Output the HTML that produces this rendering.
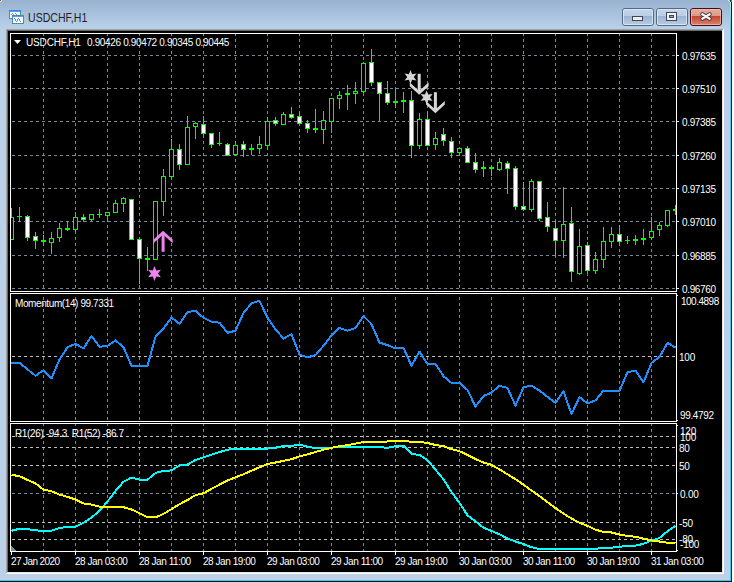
<!DOCTYPE html>
<html><head><meta charset="utf-8">
<style>
html,body{margin:0;padding:0;background:#fff;}
#win{position:absolute;left:0;top:0;width:734px;height:582px;overflow:hidden;}
.frame{position:absolute;left:0;top:0;width:730px;height:580px;background:linear-gradient(#97b1cf 0px,#b9d0e9 28px,#bbd0e8 60px,#bcd1e8 100%);border-bottom:1px solid #2ad4f0;}
.cyr{position:absolute;left:730px;top:2px;width:1px;height:579px;background:linear-gradient(#bdeef8 0px,#8adcf4 10px,#50cef2 24px,#40ccf0 300px,#2ad4f0 579px);}
.edge{position:absolute;left:0;top:0;width:732px;height:582px;border-right:1px solid #1c1414;border-bottom:1px solid #101414;box-sizing:border-box;}
.t{position:absolute;font-family:"Liberation Sans",sans-serif;white-space:pre;line-height:12px;}
svg{position:absolute;left:0;top:0;}
.title{position:absolute;left:28px;top:10px;font-family:"Liberation Sans",sans-serif;font-size:12px;letter-spacing:0px;transform:scaleX(0.88);transform-origin:0 0;color:#1e1e28;line-height:16px;white-space:pre;}
.btn{position:absolute;top:8px;width:30px;height:16px;border:1px solid #5b6e86;border-radius:3px;background:linear-gradient(#c2d5ea 0px,#bcd0e7 7px,#99b3d1 8px,#a6bed9 14px,#b7cce4 16px);box-shadow:inset 0 0 0 1px rgba(255,255,255,0.55);}
.btn.close{border-color:#4a1623;background:linear-gradient(#eaa898 0px,#e3988a 7px,#c8442a 8px,#c54a30 13px,#d87a66 16px);box-shadow:inset 0 0 0 1px rgba(255,210,200,0.6);}
.gmin{position:absolute;left:9px;top:7px;width:9px;height:3px;background:#ececec;border:1px solid #3b4556;border-radius:1px;}
.gmax{position:absolute;left:9px;top:3px;width:7px;height:5px;border:2px solid #ececec;outline:1px solid #3b4556;background:#3b4556;}
</style></head><body><div id="win">
<div class="frame"></div><div class="edge"></div><div class="cyr"></div>
<svg width="734" height="4" style="left:0;top:0" shape-rendering="crispEdges"><rect x="0" y="0" width="1" height="1" fill="#6a6a6a"/><rect x="1" y="0" width="1" height="1" fill="#e6e6e4"/><rect x="0" y="1" width="1" height="1" fill="#e6e2de"/><rect x="1" y="1" width="1" height="1" fill="#a8bcd2"/><rect x="728" y="0" width="1" height="1" fill="#c8eef8"/><rect x="729" y="0" width="1" height="1" fill="#7fcfe0"/><rect x="730" y="0" width="1" height="1" fill="#1a1414"/><rect x="730" y="1" width="1" height="1" fill="#104048"/><rect x="729" y="1" width="1" height="1" fill="#bdeef8"/><rect x="731" y="0" width="1" height="2" fill="#8a8a8a"/></svg>
<div class="title">USDCHF,H1</div>
<svg width="30" height="30" style="left:0;top:0" shape-rendering="crispEdges"><rect x="9" y="10" width="12" height="9" fill="#fff"/><rect x="9" y="10" width="1" height="1" fill="#3f8c86"/><rect x="9" y="18" width="1" height="1" fill="#3f8c86"/><rect x="10" y="10" width="1" height="1" fill="#4a8ef4"/><rect x="10" y="18" width="1" height="1" fill="#4a8ef4"/><rect x="11" y="10" width="1" height="1" fill="#3f8c86"/><rect x="11" y="18" width="1" height="1" fill="#3f8c86"/><rect x="12" y="10" width="1" height="1" fill="#4a8ef4"/><rect x="12" y="18" width="1" height="1" fill="#4a8ef4"/><rect x="13" y="10" width="1" height="1" fill="#3f8c86"/><rect x="13" y="18" width="1" height="1" fill="#3f8c86"/><rect x="14" y="10" width="1" height="1" fill="#4a8ef4"/><rect x="14" y="18" width="1" height="1" fill="#4a8ef4"/><rect x="15" y="10" width="1" height="1" fill="#3f8c86"/><rect x="15" y="18" width="1" height="1" fill="#3f8c86"/><rect x="16" y="10" width="1" height="1" fill="#4a8ef4"/><rect x="16" y="18" width="1" height="1" fill="#4a8ef4"/><rect x="17" y="10" width="1" height="1" fill="#3f8c86"/><rect x="17" y="18" width="1" height="1" fill="#3f8c86"/><rect x="18" y="10" width="1" height="1" fill="#4a8ef4"/><rect x="18" y="18" width="1" height="1" fill="#4a8ef4"/><rect x="19" y="10" width="1" height="1" fill="#3f8c86"/><rect x="19" y="18" width="1" height="1" fill="#3f8c86"/><rect x="20" y="10" width="1" height="1" fill="#4a8ef4"/><rect x="20" y="18" width="1" height="1" fill="#4a8ef4"/><rect x="9" y="11" width="1" height="1" fill="#4a8ef4"/><rect x="20" y="11" width="1" height="1" fill="#3f8c86"/><rect x="9" y="12" width="1" height="1" fill="#3f8c86"/><rect x="20" y="12" width="1" height="1" fill="#4a8ef4"/><rect x="9" y="13" width="1" height="1" fill="#4a8ef4"/><rect x="20" y="13" width="1" height="1" fill="#3f8c86"/><rect x="9" y="14" width="1" height="1" fill="#3f8c86"/><rect x="20" y="14" width="1" height="1" fill="#4a8ef4"/><rect x="9" y="15" width="1" height="1" fill="#4a8ef4"/><rect x="20" y="15" width="1" height="1" fill="#3f8c86"/><rect x="9" y="16" width="1" height="1" fill="#3f8c86"/><rect x="20" y="16" width="1" height="1" fill="#4a8ef4"/><rect x="9" y="17" width="1" height="1" fill="#4a8ef4"/><rect x="20" y="17" width="1" height="1" fill="#3f8c86"/><rect x="10" y="11" width="10" height="1" fill="#5a98f6"/><rect x="11" y="14" width="1" height="1" fill="#4f90f6"/><rect x="12" y="13" width="1" height="1" fill="#4f90f6"/><rect x="13" y="14" width="1" height="1" fill="#4f90f6"/><rect x="15" y="13" width="1" height="1" fill="#4f90f6"/><rect x="16" y="14" width="1" height="1" fill="#4f90f6"/><rect x="17" y="15" width="1" height="1" fill="#4f90f6"/><rect x="12" y="15" width="12" height="9" fill="#fff"/><rect x="12" y="15" width="1" height="1" fill="#3f8c86"/><rect x="12" y="23" width="1" height="1" fill="#3f8c86"/><rect x="13" y="15" width="1" height="1" fill="#4a8ef4"/><rect x="13" y="23" width="1" height="1" fill="#4a8ef4"/><rect x="14" y="15" width="1" height="1" fill="#3f8c86"/><rect x="14" y="23" width="1" height="1" fill="#3f8c86"/><rect x="15" y="15" width="1" height="1" fill="#4a8ef4"/><rect x="15" y="23" width="1" height="1" fill="#4a8ef4"/><rect x="16" y="15" width="1" height="1" fill="#3f8c86"/><rect x="16" y="23" width="1" height="1" fill="#3f8c86"/><rect x="17" y="15" width="1" height="1" fill="#4a8ef4"/><rect x="17" y="23" width="1" height="1" fill="#4a8ef4"/><rect x="18" y="15" width="1" height="1" fill="#3f8c86"/><rect x="18" y="23" width="1" height="1" fill="#3f8c86"/><rect x="19" y="15" width="1" height="1" fill="#4a8ef4"/><rect x="19" y="23" width="1" height="1" fill="#4a8ef4"/><rect x="20" y="15" width="1" height="1" fill="#3f8c86"/><rect x="20" y="23" width="1" height="1" fill="#3f8c86"/><rect x="21" y="15" width="1" height="1" fill="#4a8ef4"/><rect x="21" y="23" width="1" height="1" fill="#4a8ef4"/><rect x="22" y="15" width="1" height="1" fill="#3f8c86"/><rect x="22" y="23" width="1" height="1" fill="#3f8c86"/><rect x="23" y="15" width="1" height="1" fill="#4a8ef4"/><rect x="23" y="23" width="1" height="1" fill="#4a8ef4"/><rect x="12" y="16" width="1" height="1" fill="#4a8ef4"/><rect x="23" y="16" width="1" height="1" fill="#3f8c86"/><rect x="12" y="17" width="1" height="1" fill="#3f8c86"/><rect x="23" y="17" width="1" height="1" fill="#4a8ef4"/><rect x="12" y="18" width="1" height="1" fill="#4a8ef4"/><rect x="23" y="18" width="1" height="1" fill="#3f8c86"/><rect x="12" y="19" width="1" height="1" fill="#3f8c86"/><rect x="23" y="19" width="1" height="1" fill="#4a8ef4"/><rect x="12" y="20" width="1" height="1" fill="#4a8ef4"/><rect x="23" y="20" width="1" height="1" fill="#3f8c86"/><rect x="12" y="21" width="1" height="1" fill="#3f8c86"/><rect x="23" y="21" width="1" height="1" fill="#4a8ef4"/><rect x="12" y="22" width="1" height="1" fill="#4a8ef4"/><rect x="23" y="22" width="1" height="1" fill="#3f8c86"/><rect x="13" y="16" width="10" height="1" fill="#5a98f6"/><rect x="14" y="18" width="1" height="1" fill="#4f90f6"/><rect x="15" y="19" width="1" height="1" fill="#4f90f6"/><rect x="15" y="20" width="1" height="1" fill="#4f90f6"/><rect x="16" y="21" width="1" height="1" fill="#4f90f6"/><rect x="17" y="20" width="1" height="1" fill="#4f90f6"/><rect x="17" y="19" width="1" height="1" fill="#4f90f6"/><rect x="18" y="18" width="1" height="1" fill="#4f90f6"/><rect x="19" y="19" width="1" height="1" fill="#4f90f6"/><rect x="19" y="20" width="1" height="1" fill="#4f90f6"/><rect x="20" y="21" width="1" height="1" fill="#4f90f6"/></svg>
<svg width="734" height="30" style="left:0;top:0">
<defs>
<linearGradient id="gb" x1="0" y1="0" x2="0" y2="1"><stop offset="0" stop-color="#c3d5eb"/><stop offset="0.42" stop-color="#bacee6"/><stop offset="0.43" stop-color="#98b2cf"/><stop offset="1" stop-color="#b9cee6"/></linearGradient>
<linearGradient id="gc" x1="0" y1="0" x2="0" y2="1"><stop offset="0" stop-color="#eaab9c"/><stop offset="0.42" stop-color="#de9a88"/><stop offset="0.43" stop-color="#c1432a"/><stop offset="1" stop-color="#dc8670"/></linearGradient>
</defs>
<g>
<rect x="622.5" y="8.5" width="31" height="17" rx="2.5" fill="url(#gb)" stroke="#56687f"/>
<rect x="623.5" y="9.5" width="29" height="15" rx="1.5" fill="none" stroke="#e4eef9" stroke-opacity="0.7"/>
<rect x="656.5" y="8.5" width="31" height="17" rx="2.5" fill="url(#gb)" stroke="#56687f"/>
<rect x="657.5" y="9.5" width="29" height="15" rx="1.5" fill="none" stroke="#e4eef9" stroke-opacity="0.7"/>
<rect x="690.5" y="8.5" width="31" height="17" rx="2.5" fill="url(#gc)" stroke="#3e0e1a"/>
<rect x="691.5" y="9.5" width="29" height="15" rx="1.5" fill="none" stroke="#f6c8bc" stroke-opacity="0.6"/>
</g>
<g shape-rendering="crispEdges">
<rect x="632" y="16" width="11" height="5" fill="#3d4759"/>
<rect x="633" y="17" width="9" height="3" fill="#ececec"/>
<rect x="666" y="12" width="11" height="9" fill="#3d4759"/>
<rect x="667" y="13" width="9" height="7" fill="#f2f2f2"/>
<rect x="669" y="15" width="5" height="3" fill="#3d4759"/>
<rect x="670" y="16" width="3" height="1" fill="#8aa4c4"/>
</g>
<path d="M702.3 14.3 L709.7 18.7 M709.7 14.3 L702.3 18.7" stroke="#36343e" stroke-width="4.1" stroke-linecap="round"/>
<path d="M702.3 14.3 L709.7 18.7 M709.7 14.3 L702.3 18.7" stroke="#f6f6f6" stroke-width="2.3" stroke-linecap="round"/>
</svg>
<svg width="734" height="582" shape-rendering="crispEdges"><rect x="8" y="31" width="714" height="541" fill="#000"/><rect x="6" y="29" width="717" height="1" fill="#a0a0a0"/><rect x="6" y="30" width="716" height="1" fill="#696969"/><rect x="6" y="29" width="1" height="545" fill="#a0a0a0"/><rect x="7" y="30" width="1" height="543" fill="#696969"/><rect x="722" y="30" width="1" height="543" fill="#e3e3e3"/><rect x="723" y="29" width="1" height="545" fill="#ffffff"/><rect x="7" y="572" width="716" height="1" fill="#e3e3e3"/><rect x="6" y="573" width="718" height="1" fill="#ffffff"/><path d="M43.5 34v2M43.5 39v3M43.5 45v3M43.5 51v3M43.5 57v3M43.5 63v3M43.5 69v3M43.5 75v3M43.5 81v3M43.5 87v3M43.5 93v3M43.5 99v3M43.5 105v3M43.5 111v3M43.5 117v3M43.5 123v3M43.5 129v3M43.5 135v3M43.5 141v3M43.5 147v3M43.5 153v3M43.5 159v3M43.5 165v3M43.5 171v3M43.5 177v3M43.5 183v3M43.5 189v3M43.5 195v3M43.5 201v3M43.5 207v3M43.5 213v3M43.5 219v3M43.5 225v3M43.5 231v3M43.5 237v3M43.5 243v3M43.5 249v3M43.5 255v3M43.5 261v3M43.5 267v3M43.5 273v3M43.5 279v3M43.5 285v3" stroke="#778899" stroke-width="1"/><path d="M75.5 34v2M75.5 39v3M75.5 45v3M75.5 51v3M75.5 57v3M75.5 63v3M75.5 69v3M75.5 75v3M75.5 81v3M75.5 87v3M75.5 93v3M75.5 99v3M75.5 105v3M75.5 111v3M75.5 117v3M75.5 123v3M75.5 129v3M75.5 135v3M75.5 141v3M75.5 147v3M75.5 153v3M75.5 159v3M75.5 165v3M75.5 171v3M75.5 177v3M75.5 183v3M75.5 189v3M75.5 195v3M75.5 201v3M75.5 207v3M75.5 213v3M75.5 219v3M75.5 225v3M75.5 231v3M75.5 237v3M75.5 243v3M75.5 249v3M75.5 255v3M75.5 261v3M75.5 267v3M75.5 273v3M75.5 279v3M75.5 285v3" stroke="#778899" stroke-width="1"/><path d="M107.5 34v2M107.5 39v3M107.5 45v3M107.5 51v3M107.5 57v3M107.5 63v3M107.5 69v3M107.5 75v3M107.5 81v3M107.5 87v3M107.5 93v3M107.5 99v3M107.5 105v3M107.5 111v3M107.5 117v3M107.5 123v3M107.5 129v3M107.5 135v3M107.5 141v3M107.5 147v3M107.5 153v3M107.5 159v3M107.5 165v3M107.5 171v3M107.5 177v3M107.5 183v3M107.5 189v3M107.5 195v3M107.5 201v3M107.5 207v3M107.5 213v3M107.5 219v3M107.5 225v3M107.5 231v3M107.5 237v3M107.5 243v3M107.5 249v3M107.5 255v3M107.5 261v3M107.5 267v3M107.5 273v3M107.5 279v3M107.5 285v3" stroke="#778899" stroke-width="1"/><path d="M139.5 34v2M139.5 39v3M139.5 45v3M139.5 51v3M139.5 57v3M139.5 63v3M139.5 69v3M139.5 75v3M139.5 81v3M139.5 87v3M139.5 93v3M139.5 99v3M139.5 105v3M139.5 111v3M139.5 117v3M139.5 123v3M139.5 129v3M139.5 135v3M139.5 141v3M139.5 147v3M139.5 153v3M139.5 159v3M139.5 165v3M139.5 171v3M139.5 177v3M139.5 183v3M139.5 189v3M139.5 195v3M139.5 201v3M139.5 207v3M139.5 213v3M139.5 219v3M139.5 225v3M139.5 231v3M139.5 237v3M139.5 243v3M139.5 249v3M139.5 255v3M139.5 261v3M139.5 267v3M139.5 273v3M139.5 279v3M139.5 285v3" stroke="#778899" stroke-width="1"/><path d="M171.5 34v2M171.5 39v3M171.5 45v3M171.5 51v3M171.5 57v3M171.5 63v3M171.5 69v3M171.5 75v3M171.5 81v3M171.5 87v3M171.5 93v3M171.5 99v3M171.5 105v3M171.5 111v3M171.5 117v3M171.5 123v3M171.5 129v3M171.5 135v3M171.5 141v3M171.5 147v3M171.5 153v3M171.5 159v3M171.5 165v3M171.5 171v3M171.5 177v3M171.5 183v3M171.5 189v3M171.5 195v3M171.5 201v3M171.5 207v3M171.5 213v3M171.5 219v3M171.5 225v3M171.5 231v3M171.5 237v3M171.5 243v3M171.5 249v3M171.5 255v3M171.5 261v3M171.5 267v3M171.5 273v3M171.5 279v3M171.5 285v3" stroke="#778899" stroke-width="1"/><path d="M203.5 34v2M203.5 39v3M203.5 45v3M203.5 51v3M203.5 57v3M203.5 63v3M203.5 69v3M203.5 75v3M203.5 81v3M203.5 87v3M203.5 93v3M203.5 99v3M203.5 105v3M203.5 111v3M203.5 117v3M203.5 123v3M203.5 129v3M203.5 135v3M203.5 141v3M203.5 147v3M203.5 153v3M203.5 159v3M203.5 165v3M203.5 171v3M203.5 177v3M203.5 183v3M203.5 189v3M203.5 195v3M203.5 201v3M203.5 207v3M203.5 213v3M203.5 219v3M203.5 225v3M203.5 231v3M203.5 237v3M203.5 243v3M203.5 249v3M203.5 255v3M203.5 261v3M203.5 267v3M203.5 273v3M203.5 279v3M203.5 285v3" stroke="#778899" stroke-width="1"/><path d="M235.5 34v2M235.5 39v3M235.5 45v3M235.5 51v3M235.5 57v3M235.5 63v3M235.5 69v3M235.5 75v3M235.5 81v3M235.5 87v3M235.5 93v3M235.5 99v3M235.5 105v3M235.5 111v3M235.5 117v3M235.5 123v3M235.5 129v3M235.5 135v3M235.5 141v3M235.5 147v3M235.5 153v3M235.5 159v3M235.5 165v3M235.5 171v3M235.5 177v3M235.5 183v3M235.5 189v3M235.5 195v3M235.5 201v3M235.5 207v3M235.5 213v3M235.5 219v3M235.5 225v3M235.5 231v3M235.5 237v3M235.5 243v3M235.5 249v3M235.5 255v3M235.5 261v3M235.5 267v3M235.5 273v3M235.5 279v3M235.5 285v3" stroke="#778899" stroke-width="1"/><path d="M267.5 34v2M267.5 39v3M267.5 45v3M267.5 51v3M267.5 57v3M267.5 63v3M267.5 69v3M267.5 75v3M267.5 81v3M267.5 87v3M267.5 93v3M267.5 99v3M267.5 105v3M267.5 111v3M267.5 117v3M267.5 123v3M267.5 129v3M267.5 135v3M267.5 141v3M267.5 147v3M267.5 153v3M267.5 159v3M267.5 165v3M267.5 171v3M267.5 177v3M267.5 183v3M267.5 189v3M267.5 195v3M267.5 201v3M267.5 207v3M267.5 213v3M267.5 219v3M267.5 225v3M267.5 231v3M267.5 237v3M267.5 243v3M267.5 249v3M267.5 255v3M267.5 261v3M267.5 267v3M267.5 273v3M267.5 279v3M267.5 285v3" stroke="#778899" stroke-width="1"/><path d="M299.5 34v2M299.5 39v3M299.5 45v3M299.5 51v3M299.5 57v3M299.5 63v3M299.5 69v3M299.5 75v3M299.5 81v3M299.5 87v3M299.5 93v3M299.5 99v3M299.5 105v3M299.5 111v3M299.5 117v3M299.5 123v3M299.5 129v3M299.5 135v3M299.5 141v3M299.5 147v3M299.5 153v3M299.5 159v3M299.5 165v3M299.5 171v3M299.5 177v3M299.5 183v3M299.5 189v3M299.5 195v3M299.5 201v3M299.5 207v3M299.5 213v3M299.5 219v3M299.5 225v3M299.5 231v3M299.5 237v3M299.5 243v3M299.5 249v3M299.5 255v3M299.5 261v3M299.5 267v3M299.5 273v3M299.5 279v3M299.5 285v3" stroke="#778899" stroke-width="1"/><path d="M331.5 34v2M331.5 39v3M331.5 45v3M331.5 51v3M331.5 57v3M331.5 63v3M331.5 69v3M331.5 75v3M331.5 81v3M331.5 87v3M331.5 93v3M331.5 99v3M331.5 105v3M331.5 111v3M331.5 117v3M331.5 123v3M331.5 129v3M331.5 135v3M331.5 141v3M331.5 147v3M331.5 153v3M331.5 159v3M331.5 165v3M331.5 171v3M331.5 177v3M331.5 183v3M331.5 189v3M331.5 195v3M331.5 201v3M331.5 207v3M331.5 213v3M331.5 219v3M331.5 225v3M331.5 231v3M331.5 237v3M331.5 243v3M331.5 249v3M331.5 255v3M331.5 261v3M331.5 267v3M331.5 273v3M331.5 279v3M331.5 285v3" stroke="#778899" stroke-width="1"/><path d="M363.5 34v2M363.5 39v3M363.5 45v3M363.5 51v3M363.5 57v3M363.5 63v3M363.5 69v3M363.5 75v3M363.5 81v3M363.5 87v3M363.5 93v3M363.5 99v3M363.5 105v3M363.5 111v3M363.5 117v3M363.5 123v3M363.5 129v3M363.5 135v3M363.5 141v3M363.5 147v3M363.5 153v3M363.5 159v3M363.5 165v3M363.5 171v3M363.5 177v3M363.5 183v3M363.5 189v3M363.5 195v3M363.5 201v3M363.5 207v3M363.5 213v3M363.5 219v3M363.5 225v3M363.5 231v3M363.5 237v3M363.5 243v3M363.5 249v3M363.5 255v3M363.5 261v3M363.5 267v3M363.5 273v3M363.5 279v3M363.5 285v3" stroke="#778899" stroke-width="1"/><path d="M395.5 34v2M395.5 39v3M395.5 45v3M395.5 51v3M395.5 57v3M395.5 63v3M395.5 69v3M395.5 75v3M395.5 81v3M395.5 87v3M395.5 93v3M395.5 99v3M395.5 105v3M395.5 111v3M395.5 117v3M395.5 123v3M395.5 129v3M395.5 135v3M395.5 141v3M395.5 147v3M395.5 153v3M395.5 159v3M395.5 165v3M395.5 171v3M395.5 177v3M395.5 183v3M395.5 189v3M395.5 195v3M395.5 201v3M395.5 207v3M395.5 213v3M395.5 219v3M395.5 225v3M395.5 231v3M395.5 237v3M395.5 243v3M395.5 249v3M395.5 255v3M395.5 261v3M395.5 267v3M395.5 273v3M395.5 279v3M395.5 285v3" stroke="#778899" stroke-width="1"/><path d="M427.5 34v2M427.5 39v3M427.5 45v3M427.5 51v3M427.5 57v3M427.5 63v3M427.5 69v3M427.5 75v3M427.5 81v3M427.5 87v3M427.5 93v3M427.5 99v3M427.5 105v3M427.5 111v3M427.5 117v3M427.5 123v3M427.5 129v3M427.5 135v3M427.5 141v3M427.5 147v3M427.5 153v3M427.5 159v3M427.5 165v3M427.5 171v3M427.5 177v3M427.5 183v3M427.5 189v3M427.5 195v3M427.5 201v3M427.5 207v3M427.5 213v3M427.5 219v3M427.5 225v3M427.5 231v3M427.5 237v3M427.5 243v3M427.5 249v3M427.5 255v3M427.5 261v3M427.5 267v3M427.5 273v3M427.5 279v3M427.5 285v3" stroke="#778899" stroke-width="1"/><path d="M459.5 34v2M459.5 39v3M459.5 45v3M459.5 51v3M459.5 57v3M459.5 63v3M459.5 69v3M459.5 75v3M459.5 81v3M459.5 87v3M459.5 93v3M459.5 99v3M459.5 105v3M459.5 111v3M459.5 117v3M459.5 123v3M459.5 129v3M459.5 135v3M459.5 141v3M459.5 147v3M459.5 153v3M459.5 159v3M459.5 165v3M459.5 171v3M459.5 177v3M459.5 183v3M459.5 189v3M459.5 195v3M459.5 201v3M459.5 207v3M459.5 213v3M459.5 219v3M459.5 225v3M459.5 231v3M459.5 237v3M459.5 243v3M459.5 249v3M459.5 255v3M459.5 261v3M459.5 267v3M459.5 273v3M459.5 279v3M459.5 285v3" stroke="#778899" stroke-width="1"/><path d="M491.5 34v2M491.5 39v3M491.5 45v3M491.5 51v3M491.5 57v3M491.5 63v3M491.5 69v3M491.5 75v3M491.5 81v3M491.5 87v3M491.5 93v3M491.5 99v3M491.5 105v3M491.5 111v3M491.5 117v3M491.5 123v3M491.5 129v3M491.5 135v3M491.5 141v3M491.5 147v3M491.5 153v3M491.5 159v3M491.5 165v3M491.5 171v3M491.5 177v3M491.5 183v3M491.5 189v3M491.5 195v3M491.5 201v3M491.5 207v3M491.5 213v3M491.5 219v3M491.5 225v3M491.5 231v3M491.5 237v3M491.5 243v3M491.5 249v3M491.5 255v3M491.5 261v3M491.5 267v3M491.5 273v3M491.5 279v3M491.5 285v3" stroke="#778899" stroke-width="1"/><path d="M523.5 34v2M523.5 39v3M523.5 45v3M523.5 51v3M523.5 57v3M523.5 63v3M523.5 69v3M523.5 75v3M523.5 81v3M523.5 87v3M523.5 93v3M523.5 99v3M523.5 105v3M523.5 111v3M523.5 117v3M523.5 123v3M523.5 129v3M523.5 135v3M523.5 141v3M523.5 147v3M523.5 153v3M523.5 159v3M523.5 165v3M523.5 171v3M523.5 177v3M523.5 183v3M523.5 189v3M523.5 195v3M523.5 201v3M523.5 207v3M523.5 213v3M523.5 219v3M523.5 225v3M523.5 231v3M523.5 237v3M523.5 243v3M523.5 249v3M523.5 255v3M523.5 261v3M523.5 267v3M523.5 273v3M523.5 279v3M523.5 285v3" stroke="#778899" stroke-width="1"/><path d="M555.5 34v2M555.5 39v3M555.5 45v3M555.5 51v3M555.5 57v3M555.5 63v3M555.5 69v3M555.5 75v3M555.5 81v3M555.5 87v3M555.5 93v3M555.5 99v3M555.5 105v3M555.5 111v3M555.5 117v3M555.5 123v3M555.5 129v3M555.5 135v3M555.5 141v3M555.5 147v3M555.5 153v3M555.5 159v3M555.5 165v3M555.5 171v3M555.5 177v3M555.5 183v3M555.5 189v3M555.5 195v3M555.5 201v3M555.5 207v3M555.5 213v3M555.5 219v3M555.5 225v3M555.5 231v3M555.5 237v3M555.5 243v3M555.5 249v3M555.5 255v3M555.5 261v3M555.5 267v3M555.5 273v3M555.5 279v3M555.5 285v3" stroke="#778899" stroke-width="1"/><path d="M587.5 34v2M587.5 39v3M587.5 45v3M587.5 51v3M587.5 57v3M587.5 63v3M587.5 69v3M587.5 75v3M587.5 81v3M587.5 87v3M587.5 93v3M587.5 99v3M587.5 105v3M587.5 111v3M587.5 117v3M587.5 123v3M587.5 129v3M587.5 135v3M587.5 141v3M587.5 147v3M587.5 153v3M587.5 159v3M587.5 165v3M587.5 171v3M587.5 177v3M587.5 183v3M587.5 189v3M587.5 195v3M587.5 201v3M587.5 207v3M587.5 213v3M587.5 219v3M587.5 225v3M587.5 231v3M587.5 237v3M587.5 243v3M587.5 249v3M587.5 255v3M587.5 261v3M587.5 267v3M587.5 273v3M587.5 279v3M587.5 285v3" stroke="#778899" stroke-width="1"/><path d="M619.5 34v2M619.5 39v3M619.5 45v3M619.5 51v3M619.5 57v3M619.5 63v3M619.5 69v3M619.5 75v3M619.5 81v3M619.5 87v3M619.5 93v3M619.5 99v3M619.5 105v3M619.5 111v3M619.5 117v3M619.5 123v3M619.5 129v3M619.5 135v3M619.5 141v3M619.5 147v3M619.5 153v3M619.5 159v3M619.5 165v3M619.5 171v3M619.5 177v3M619.5 183v3M619.5 189v3M619.5 195v3M619.5 201v3M619.5 207v3M619.5 213v3M619.5 219v3M619.5 225v3M619.5 231v3M619.5 237v3M619.5 243v3M619.5 249v3M619.5 255v3M619.5 261v3M619.5 267v3M619.5 273v3M619.5 279v3M619.5 285v3" stroke="#778899" stroke-width="1"/><path d="M651.5 34v2M651.5 39v3M651.5 45v3M651.5 51v3M651.5 57v3M651.5 63v3M651.5 69v3M651.5 75v3M651.5 81v3M651.5 87v3M651.5 93v3M651.5 99v3M651.5 105v3M651.5 111v3M651.5 117v3M651.5 123v3M651.5 129v3M651.5 135v3M651.5 141v3M651.5 147v3M651.5 153v3M651.5 159v3M651.5 165v3M651.5 171v3M651.5 177v3M651.5 183v3M651.5 189v3M651.5 195v3M651.5 201v3M651.5 207v3M651.5 213v3M651.5 219v3M651.5 225v3M651.5 231v3M651.5 237v3M651.5 243v3M651.5 249v3M651.5 255v3M651.5 261v3M651.5 267v3M651.5 273v3M651.5 279v3M651.5 285v3" stroke="#778899" stroke-width="1"/><path d="M43.5 297v3M43.5 303v3M43.5 309v3M43.5 315v3M43.5 321v3M43.5 327v3M43.5 333v3M43.5 339v3M43.5 345v3M43.5 351v3M43.5 357v3M43.5 363v3M43.5 369v3M43.5 375v3M43.5 381v3M43.5 387v3M43.5 393v3M43.5 399v3M43.5 405v3M43.5 411v3M43.5 417v3" stroke="#778899" stroke-width="1"/><path d="M75.5 297v3M75.5 303v3M75.5 309v3M75.5 315v3M75.5 321v3M75.5 327v3M75.5 333v3M75.5 339v3M75.5 345v3M75.5 351v3M75.5 357v3M75.5 363v3M75.5 369v3M75.5 375v3M75.5 381v3M75.5 387v3M75.5 393v3M75.5 399v3M75.5 405v3M75.5 411v3M75.5 417v3" stroke="#778899" stroke-width="1"/><path d="M107.5 297v3M107.5 303v3M107.5 309v3M107.5 315v3M107.5 321v3M107.5 327v3M107.5 333v3M107.5 339v3M107.5 345v3M107.5 351v3M107.5 357v3M107.5 363v3M107.5 369v3M107.5 375v3M107.5 381v3M107.5 387v3M107.5 393v3M107.5 399v3M107.5 405v3M107.5 411v3M107.5 417v3" stroke="#778899" stroke-width="1"/><path d="M139.5 297v3M139.5 303v3M139.5 309v3M139.5 315v3M139.5 321v3M139.5 327v3M139.5 333v3M139.5 339v3M139.5 345v3M139.5 351v3M139.5 357v3M139.5 363v3M139.5 369v3M139.5 375v3M139.5 381v3M139.5 387v3M139.5 393v3M139.5 399v3M139.5 405v3M139.5 411v3M139.5 417v3" stroke="#778899" stroke-width="1"/><path d="M171.5 297v3M171.5 303v3M171.5 309v3M171.5 315v3M171.5 321v3M171.5 327v3M171.5 333v3M171.5 339v3M171.5 345v3M171.5 351v3M171.5 357v3M171.5 363v3M171.5 369v3M171.5 375v3M171.5 381v3M171.5 387v3M171.5 393v3M171.5 399v3M171.5 405v3M171.5 411v3M171.5 417v3" stroke="#778899" stroke-width="1"/><path d="M203.5 297v3M203.5 303v3M203.5 309v3M203.5 315v3M203.5 321v3M203.5 327v3M203.5 333v3M203.5 339v3M203.5 345v3M203.5 351v3M203.5 357v3M203.5 363v3M203.5 369v3M203.5 375v3M203.5 381v3M203.5 387v3M203.5 393v3M203.5 399v3M203.5 405v3M203.5 411v3M203.5 417v3" stroke="#778899" stroke-width="1"/><path d="M235.5 297v3M235.5 303v3M235.5 309v3M235.5 315v3M235.5 321v3M235.5 327v3M235.5 333v3M235.5 339v3M235.5 345v3M235.5 351v3M235.5 357v3M235.5 363v3M235.5 369v3M235.5 375v3M235.5 381v3M235.5 387v3M235.5 393v3M235.5 399v3M235.5 405v3M235.5 411v3M235.5 417v3" stroke="#778899" stroke-width="1"/><path d="M267.5 297v3M267.5 303v3M267.5 309v3M267.5 315v3M267.5 321v3M267.5 327v3M267.5 333v3M267.5 339v3M267.5 345v3M267.5 351v3M267.5 357v3M267.5 363v3M267.5 369v3M267.5 375v3M267.5 381v3M267.5 387v3M267.5 393v3M267.5 399v3M267.5 405v3M267.5 411v3M267.5 417v3" stroke="#778899" stroke-width="1"/><path d="M299.5 297v3M299.5 303v3M299.5 309v3M299.5 315v3M299.5 321v3M299.5 327v3M299.5 333v3M299.5 339v3M299.5 345v3M299.5 351v3M299.5 357v3M299.5 363v3M299.5 369v3M299.5 375v3M299.5 381v3M299.5 387v3M299.5 393v3M299.5 399v3M299.5 405v3M299.5 411v3M299.5 417v3" stroke="#778899" stroke-width="1"/><path d="M331.5 297v3M331.5 303v3M331.5 309v3M331.5 315v3M331.5 321v3M331.5 327v3M331.5 333v3M331.5 339v3M331.5 345v3M331.5 351v3M331.5 357v3M331.5 363v3M331.5 369v3M331.5 375v3M331.5 381v3M331.5 387v3M331.5 393v3M331.5 399v3M331.5 405v3M331.5 411v3M331.5 417v3" stroke="#778899" stroke-width="1"/><path d="M363.5 297v3M363.5 303v3M363.5 309v3M363.5 315v3M363.5 321v3M363.5 327v3M363.5 333v3M363.5 339v3M363.5 345v3M363.5 351v3M363.5 357v3M363.5 363v3M363.5 369v3M363.5 375v3M363.5 381v3M363.5 387v3M363.5 393v3M363.5 399v3M363.5 405v3M363.5 411v3M363.5 417v3" stroke="#778899" stroke-width="1"/><path d="M395.5 297v3M395.5 303v3M395.5 309v3M395.5 315v3M395.5 321v3M395.5 327v3M395.5 333v3M395.5 339v3M395.5 345v3M395.5 351v3M395.5 357v3M395.5 363v3M395.5 369v3M395.5 375v3M395.5 381v3M395.5 387v3M395.5 393v3M395.5 399v3M395.5 405v3M395.5 411v3M395.5 417v3" stroke="#778899" stroke-width="1"/><path d="M427.5 297v3M427.5 303v3M427.5 309v3M427.5 315v3M427.5 321v3M427.5 327v3M427.5 333v3M427.5 339v3M427.5 345v3M427.5 351v3M427.5 357v3M427.5 363v3M427.5 369v3M427.5 375v3M427.5 381v3M427.5 387v3M427.5 393v3M427.5 399v3M427.5 405v3M427.5 411v3M427.5 417v3" stroke="#778899" stroke-width="1"/><path d="M459.5 297v3M459.5 303v3M459.5 309v3M459.5 315v3M459.5 321v3M459.5 327v3M459.5 333v3M459.5 339v3M459.5 345v3M459.5 351v3M459.5 357v3M459.5 363v3M459.5 369v3M459.5 375v3M459.5 381v3M459.5 387v3M459.5 393v3M459.5 399v3M459.5 405v3M459.5 411v3M459.5 417v3" stroke="#778899" stroke-width="1"/><path d="M491.5 297v3M491.5 303v3M491.5 309v3M491.5 315v3M491.5 321v3M491.5 327v3M491.5 333v3M491.5 339v3M491.5 345v3M491.5 351v3M491.5 357v3M491.5 363v3M491.5 369v3M491.5 375v3M491.5 381v3M491.5 387v3M491.5 393v3M491.5 399v3M491.5 405v3M491.5 411v3M491.5 417v3" stroke="#778899" stroke-width="1"/><path d="M523.5 297v3M523.5 303v3M523.5 309v3M523.5 315v3M523.5 321v3M523.5 327v3M523.5 333v3M523.5 339v3M523.5 345v3M523.5 351v3M523.5 357v3M523.5 363v3M523.5 369v3M523.5 375v3M523.5 381v3M523.5 387v3M523.5 393v3M523.5 399v3M523.5 405v3M523.5 411v3M523.5 417v3" stroke="#778899" stroke-width="1"/><path d="M555.5 297v3M555.5 303v3M555.5 309v3M555.5 315v3M555.5 321v3M555.5 327v3M555.5 333v3M555.5 339v3M555.5 345v3M555.5 351v3M555.5 357v3M555.5 363v3M555.5 369v3M555.5 375v3M555.5 381v3M555.5 387v3M555.5 393v3M555.5 399v3M555.5 405v3M555.5 411v3M555.5 417v3" stroke="#778899" stroke-width="1"/><path d="M587.5 297v3M587.5 303v3M587.5 309v3M587.5 315v3M587.5 321v3M587.5 327v3M587.5 333v3M587.5 339v3M587.5 345v3M587.5 351v3M587.5 357v3M587.5 363v3M587.5 369v3M587.5 375v3M587.5 381v3M587.5 387v3M587.5 393v3M587.5 399v3M587.5 405v3M587.5 411v3M587.5 417v3" stroke="#778899" stroke-width="1"/><path d="M619.5 297v3M619.5 303v3M619.5 309v3M619.5 315v3M619.5 321v3M619.5 327v3M619.5 333v3M619.5 339v3M619.5 345v3M619.5 351v3M619.5 357v3M619.5 363v3M619.5 369v3M619.5 375v3M619.5 381v3M619.5 387v3M619.5 393v3M619.5 399v3M619.5 405v3M619.5 411v3M619.5 417v3" stroke="#778899" stroke-width="1"/><path d="M651.5 297v3M651.5 303v3M651.5 309v3M651.5 315v3M651.5 321v3M651.5 327v3M651.5 333v3M651.5 339v3M651.5 345v3M651.5 351v3M651.5 357v3M651.5 363v3M651.5 369v3M651.5 375v3M651.5 381v3M651.5 387v3M651.5 393v3M651.5 399v3M651.5 405v3M651.5 411v3M651.5 417v3" stroke="#778899" stroke-width="1"/><path d="M43.5 424v2M43.5 429v3M43.5 435v3M43.5 441v3M43.5 447v3M43.5 453v3M43.5 459v3M43.5 465v3M43.5 471v3M43.5 477v3M43.5 483v3M43.5 489v3M43.5 495v3M43.5 501v3M43.5 507v3M43.5 513v3M43.5 519v3M43.5 525v3M43.5 531v3M43.5 537v3M43.5 543v3M43.5 549v2" stroke="#778899" stroke-width="1"/><path d="M75.5 424v2M75.5 429v3M75.5 435v3M75.5 441v3M75.5 447v3M75.5 453v3M75.5 459v3M75.5 465v3M75.5 471v3M75.5 477v3M75.5 483v3M75.5 489v3M75.5 495v3M75.5 501v3M75.5 507v3M75.5 513v3M75.5 519v3M75.5 525v3M75.5 531v3M75.5 537v3M75.5 543v3M75.5 549v2" stroke="#778899" stroke-width="1"/><path d="M107.5 424v2M107.5 429v3M107.5 435v3M107.5 441v3M107.5 447v3M107.5 453v3M107.5 459v3M107.5 465v3M107.5 471v3M107.5 477v3M107.5 483v3M107.5 489v3M107.5 495v3M107.5 501v3M107.5 507v3M107.5 513v3M107.5 519v3M107.5 525v3M107.5 531v3M107.5 537v3M107.5 543v3M107.5 549v2" stroke="#778899" stroke-width="1"/><path d="M139.5 424v2M139.5 429v3M139.5 435v3M139.5 441v3M139.5 447v3M139.5 453v3M139.5 459v3M139.5 465v3M139.5 471v3M139.5 477v3M139.5 483v3M139.5 489v3M139.5 495v3M139.5 501v3M139.5 507v3M139.5 513v3M139.5 519v3M139.5 525v3M139.5 531v3M139.5 537v3M139.5 543v3M139.5 549v2" stroke="#778899" stroke-width="1"/><path d="M171.5 424v2M171.5 429v3M171.5 435v3M171.5 441v3M171.5 447v3M171.5 453v3M171.5 459v3M171.5 465v3M171.5 471v3M171.5 477v3M171.5 483v3M171.5 489v3M171.5 495v3M171.5 501v3M171.5 507v3M171.5 513v3M171.5 519v3M171.5 525v3M171.5 531v3M171.5 537v3M171.5 543v3M171.5 549v2" stroke="#778899" stroke-width="1"/><path d="M203.5 424v2M203.5 429v3M203.5 435v3M203.5 441v3M203.5 447v3M203.5 453v3M203.5 459v3M203.5 465v3M203.5 471v3M203.5 477v3M203.5 483v3M203.5 489v3M203.5 495v3M203.5 501v3M203.5 507v3M203.5 513v3M203.5 519v3M203.5 525v3M203.5 531v3M203.5 537v3M203.5 543v3M203.5 549v2" stroke="#778899" stroke-width="1"/><path d="M235.5 424v2M235.5 429v3M235.5 435v3M235.5 441v3M235.5 447v3M235.5 453v3M235.5 459v3M235.5 465v3M235.5 471v3M235.5 477v3M235.5 483v3M235.5 489v3M235.5 495v3M235.5 501v3M235.5 507v3M235.5 513v3M235.5 519v3M235.5 525v3M235.5 531v3M235.5 537v3M235.5 543v3M235.5 549v2" stroke="#778899" stroke-width="1"/><path d="M267.5 424v2M267.5 429v3M267.5 435v3M267.5 441v3M267.5 447v3M267.5 453v3M267.5 459v3M267.5 465v3M267.5 471v3M267.5 477v3M267.5 483v3M267.5 489v3M267.5 495v3M267.5 501v3M267.5 507v3M267.5 513v3M267.5 519v3M267.5 525v3M267.5 531v3M267.5 537v3M267.5 543v3M267.5 549v2" stroke="#778899" stroke-width="1"/><path d="M299.5 424v2M299.5 429v3M299.5 435v3M299.5 441v3M299.5 447v3M299.5 453v3M299.5 459v3M299.5 465v3M299.5 471v3M299.5 477v3M299.5 483v3M299.5 489v3M299.5 495v3M299.5 501v3M299.5 507v3M299.5 513v3M299.5 519v3M299.5 525v3M299.5 531v3M299.5 537v3M299.5 543v3M299.5 549v2" stroke="#778899" stroke-width="1"/><path d="M331.5 424v2M331.5 429v3M331.5 435v3M331.5 441v3M331.5 447v3M331.5 453v3M331.5 459v3M331.5 465v3M331.5 471v3M331.5 477v3M331.5 483v3M331.5 489v3M331.5 495v3M331.5 501v3M331.5 507v3M331.5 513v3M331.5 519v3M331.5 525v3M331.5 531v3M331.5 537v3M331.5 543v3M331.5 549v2" stroke="#778899" stroke-width="1"/><path d="M363.5 424v2M363.5 429v3M363.5 435v3M363.5 441v3M363.5 447v3M363.5 453v3M363.5 459v3M363.5 465v3M363.5 471v3M363.5 477v3M363.5 483v3M363.5 489v3M363.5 495v3M363.5 501v3M363.5 507v3M363.5 513v3M363.5 519v3M363.5 525v3M363.5 531v3M363.5 537v3M363.5 543v3M363.5 549v2" stroke="#778899" stroke-width="1"/><path d="M395.5 424v2M395.5 429v3M395.5 435v3M395.5 441v3M395.5 447v3M395.5 453v3M395.5 459v3M395.5 465v3M395.5 471v3M395.5 477v3M395.5 483v3M395.5 489v3M395.5 495v3M395.5 501v3M395.5 507v3M395.5 513v3M395.5 519v3M395.5 525v3M395.5 531v3M395.5 537v3M395.5 543v3M395.5 549v2" stroke="#778899" stroke-width="1"/><path d="M427.5 424v2M427.5 429v3M427.5 435v3M427.5 441v3M427.5 447v3M427.5 453v3M427.5 459v3M427.5 465v3M427.5 471v3M427.5 477v3M427.5 483v3M427.5 489v3M427.5 495v3M427.5 501v3M427.5 507v3M427.5 513v3M427.5 519v3M427.5 525v3M427.5 531v3M427.5 537v3M427.5 543v3M427.5 549v2" stroke="#778899" stroke-width="1"/><path d="M459.5 424v2M459.5 429v3M459.5 435v3M459.5 441v3M459.5 447v3M459.5 453v3M459.5 459v3M459.5 465v3M459.5 471v3M459.5 477v3M459.5 483v3M459.5 489v3M459.5 495v3M459.5 501v3M459.5 507v3M459.5 513v3M459.5 519v3M459.5 525v3M459.5 531v3M459.5 537v3M459.5 543v3M459.5 549v2" stroke="#778899" stroke-width="1"/><path d="M491.5 424v2M491.5 429v3M491.5 435v3M491.5 441v3M491.5 447v3M491.5 453v3M491.5 459v3M491.5 465v3M491.5 471v3M491.5 477v3M491.5 483v3M491.5 489v3M491.5 495v3M491.5 501v3M491.5 507v3M491.5 513v3M491.5 519v3M491.5 525v3M491.5 531v3M491.5 537v3M491.5 543v3M491.5 549v2" stroke="#778899" stroke-width="1"/><path d="M523.5 424v2M523.5 429v3M523.5 435v3M523.5 441v3M523.5 447v3M523.5 453v3M523.5 459v3M523.5 465v3M523.5 471v3M523.5 477v3M523.5 483v3M523.5 489v3M523.5 495v3M523.5 501v3M523.5 507v3M523.5 513v3M523.5 519v3M523.5 525v3M523.5 531v3M523.5 537v3M523.5 543v3M523.5 549v2" stroke="#778899" stroke-width="1"/><path d="M555.5 424v2M555.5 429v3M555.5 435v3M555.5 441v3M555.5 447v3M555.5 453v3M555.5 459v3M555.5 465v3M555.5 471v3M555.5 477v3M555.5 483v3M555.5 489v3M555.5 495v3M555.5 501v3M555.5 507v3M555.5 513v3M555.5 519v3M555.5 525v3M555.5 531v3M555.5 537v3M555.5 543v3M555.5 549v2" stroke="#778899" stroke-width="1"/><path d="M587.5 424v2M587.5 429v3M587.5 435v3M587.5 441v3M587.5 447v3M587.5 453v3M587.5 459v3M587.5 465v3M587.5 471v3M587.5 477v3M587.5 483v3M587.5 489v3M587.5 495v3M587.5 501v3M587.5 507v3M587.5 513v3M587.5 519v3M587.5 525v3M587.5 531v3M587.5 537v3M587.5 543v3M587.5 549v2" stroke="#778899" stroke-width="1"/><path d="M619.5 424v2M619.5 429v3M619.5 435v3M619.5 441v3M619.5 447v3M619.5 453v3M619.5 459v3M619.5 465v3M619.5 471v3M619.5 477v3M619.5 483v3M619.5 489v3M619.5 495v3M619.5 501v3M619.5 507v3M619.5 513v3M619.5 519v3M619.5 525v3M619.5 531v3M619.5 537v3M619.5 543v3M619.5 549v2" stroke="#778899" stroke-width="1"/><path d="M651.5 424v2M651.5 429v3M651.5 435v3M651.5 441v3M651.5 447v3M651.5 453v3M651.5 459v3M651.5 465v3M651.5 471v3M651.5 477v3M651.5 483v3M651.5 489v3M651.5 495v3M651.5 501v3M651.5 507v3M651.5 513v3M651.5 519v3M651.5 525v3M651.5 531v3M651.5 537v3M651.5 543v3M651.5 549v2" stroke="#778899" stroke-width="1"/><path d="M12 55.5h3M18 55.5h3M24 55.5h3M30 55.5h3M36 55.5h3M42 55.5h3M48 55.5h3M54 55.5h3M60 55.5h3M66 55.5h3M72 55.5h3M78 55.5h3M84 55.5h3M90 55.5h3M96 55.5h3M102 55.5h3M108 55.5h3M114 55.5h3M120 55.5h3M126 55.5h3M132 55.5h3M138 55.5h3M144 55.5h3M150 55.5h3M156 55.5h3M162 55.5h3M168 55.5h3M174 55.5h3M180 55.5h3M186 55.5h3M192 55.5h3M198 55.5h3M204 55.5h3M210 55.5h3M216 55.5h3M222 55.5h3M228 55.5h3M234 55.5h3M240 55.5h3M246 55.5h3M252 55.5h3M258 55.5h3M264 55.5h3M270 55.5h3M276 55.5h3M282 55.5h3M288 55.5h3M294 55.5h3M300 55.5h3M306 55.5h3M312 55.5h3M318 55.5h3M324 55.5h3M330 55.5h3M336 55.5h3M342 55.5h3M348 55.5h3M354 55.5h3M360 55.5h3M366 55.5h3M372 55.5h3M378 55.5h3M384 55.5h3M390 55.5h3M396 55.5h3M402 55.5h3M408 55.5h3M414 55.5h3M420 55.5h3M426 55.5h3M432 55.5h3M438 55.5h3M444 55.5h3M450 55.5h3M456 55.5h3M462 55.5h3M468 55.5h3M474 55.5h3M480 55.5h3M486 55.5h3M492 55.5h3M498 55.5h3M504 55.5h3M510 55.5h3M516 55.5h3M522 55.5h3M528 55.5h3M534 55.5h3M540 55.5h3M546 55.5h3M552 55.5h3M558 55.5h3M564 55.5h3M570 55.5h3M576 55.5h3M582 55.5h3M588 55.5h3M594 55.5h3M600 55.5h3M606 55.5h3M612 55.5h3M618 55.5h3M624 55.5h3M630 55.5h3M636 55.5h3M642 55.5h3M648 55.5h3M654 55.5h3M660 55.5h3M666 55.5h3M672 55.5h3" stroke="#778899" stroke-width="1"/><path d="M12 88.5h3M18 88.5h3M24 88.5h3M30 88.5h3M36 88.5h3M42 88.5h3M48 88.5h3M54 88.5h3M60 88.5h3M66 88.5h3M72 88.5h3M78 88.5h3M84 88.5h3M90 88.5h3M96 88.5h3M102 88.5h3M108 88.5h3M114 88.5h3M120 88.5h3M126 88.5h3M132 88.5h3M138 88.5h3M144 88.5h3M150 88.5h3M156 88.5h3M162 88.5h3M168 88.5h3M174 88.5h3M180 88.5h3M186 88.5h3M192 88.5h3M198 88.5h3M204 88.5h3M210 88.5h3M216 88.5h3M222 88.5h3M228 88.5h3M234 88.5h3M240 88.5h3M246 88.5h3M252 88.5h3M258 88.5h3M264 88.5h3M270 88.5h3M276 88.5h3M282 88.5h3M288 88.5h3M294 88.5h3M300 88.5h3M306 88.5h3M312 88.5h3M318 88.5h3M324 88.5h3M330 88.5h3M336 88.5h3M342 88.5h3M348 88.5h3M354 88.5h3M360 88.5h3M366 88.5h3M372 88.5h3M378 88.5h3M384 88.5h3M390 88.5h3M396 88.5h3M402 88.5h3M408 88.5h3M414 88.5h3M420 88.5h3M426 88.5h3M432 88.5h3M438 88.5h3M444 88.5h3M450 88.5h3M456 88.5h3M462 88.5h3M468 88.5h3M474 88.5h3M480 88.5h3M486 88.5h3M492 88.5h3M498 88.5h3M504 88.5h3M510 88.5h3M516 88.5h3M522 88.5h3M528 88.5h3M534 88.5h3M540 88.5h3M546 88.5h3M552 88.5h3M558 88.5h3M564 88.5h3M570 88.5h3M576 88.5h3M582 88.5h3M588 88.5h3M594 88.5h3M600 88.5h3M606 88.5h3M612 88.5h3M618 88.5h3M624 88.5h3M630 88.5h3M636 88.5h3M642 88.5h3M648 88.5h3M654 88.5h3M660 88.5h3M666 88.5h3M672 88.5h3" stroke="#778899" stroke-width="1"/><path d="M12 121.5h3M18 121.5h3M24 121.5h3M30 121.5h3M36 121.5h3M42 121.5h3M48 121.5h3M54 121.5h3M60 121.5h3M66 121.5h3M72 121.5h3M78 121.5h3M84 121.5h3M90 121.5h3M96 121.5h3M102 121.5h3M108 121.5h3M114 121.5h3M120 121.5h3M126 121.5h3M132 121.5h3M138 121.5h3M144 121.5h3M150 121.5h3M156 121.5h3M162 121.5h3M168 121.5h3M174 121.5h3M180 121.5h3M186 121.5h3M192 121.5h3M198 121.5h3M204 121.5h3M210 121.5h3M216 121.5h3M222 121.5h3M228 121.5h3M234 121.5h3M240 121.5h3M246 121.5h3M252 121.5h3M258 121.5h3M264 121.5h3M270 121.5h3M276 121.5h3M282 121.5h3M288 121.5h3M294 121.5h3M300 121.5h3M306 121.5h3M312 121.5h3M318 121.5h3M324 121.5h3M330 121.5h3M336 121.5h3M342 121.5h3M348 121.5h3M354 121.5h3M360 121.5h3M366 121.5h3M372 121.5h3M378 121.5h3M384 121.5h3M390 121.5h3M396 121.5h3M402 121.5h3M408 121.5h3M414 121.5h3M420 121.5h3M426 121.5h3M432 121.5h3M438 121.5h3M444 121.5h3M450 121.5h3M456 121.5h3M462 121.5h3M468 121.5h3M474 121.5h3M480 121.5h3M486 121.5h3M492 121.5h3M498 121.5h3M504 121.5h3M510 121.5h3M516 121.5h3M522 121.5h3M528 121.5h3M534 121.5h3M540 121.5h3M546 121.5h3M552 121.5h3M558 121.5h3M564 121.5h3M570 121.5h3M576 121.5h3M582 121.5h3M588 121.5h3M594 121.5h3M600 121.5h3M606 121.5h3M612 121.5h3M618 121.5h3M624 121.5h3M630 121.5h3M636 121.5h3M642 121.5h3M648 121.5h3M654 121.5h3M660 121.5h3M666 121.5h3M672 121.5h3" stroke="#778899" stroke-width="1"/><path d="M12 155.5h3M18 155.5h3M24 155.5h3M30 155.5h3M36 155.5h3M42 155.5h3M48 155.5h3M54 155.5h3M60 155.5h3M66 155.5h3M72 155.5h3M78 155.5h3M84 155.5h3M90 155.5h3M96 155.5h3M102 155.5h3M108 155.5h3M114 155.5h3M120 155.5h3M126 155.5h3M132 155.5h3M138 155.5h3M144 155.5h3M150 155.5h3M156 155.5h3M162 155.5h3M168 155.5h3M174 155.5h3M180 155.5h3M186 155.5h3M192 155.5h3M198 155.5h3M204 155.5h3M210 155.5h3M216 155.5h3M222 155.5h3M228 155.5h3M234 155.5h3M240 155.5h3M246 155.5h3M252 155.5h3M258 155.5h3M264 155.5h3M270 155.5h3M276 155.5h3M282 155.5h3M288 155.5h3M294 155.5h3M300 155.5h3M306 155.5h3M312 155.5h3M318 155.5h3M324 155.5h3M330 155.5h3M336 155.5h3M342 155.5h3M348 155.5h3M354 155.5h3M360 155.5h3M366 155.5h3M372 155.5h3M378 155.5h3M384 155.5h3M390 155.5h3M396 155.5h3M402 155.5h3M408 155.5h3M414 155.5h3M420 155.5h3M426 155.5h3M432 155.5h3M438 155.5h3M444 155.5h3M450 155.5h3M456 155.5h3M462 155.5h3M468 155.5h3M474 155.5h3M480 155.5h3M486 155.5h3M492 155.5h3M498 155.5h3M504 155.5h3M510 155.5h3M516 155.5h3M522 155.5h3M528 155.5h3M534 155.5h3M540 155.5h3M546 155.5h3M552 155.5h3M558 155.5h3M564 155.5h3M570 155.5h3M576 155.5h3M582 155.5h3M588 155.5h3M594 155.5h3M600 155.5h3M606 155.5h3M612 155.5h3M618 155.5h3M624 155.5h3M630 155.5h3M636 155.5h3M642 155.5h3M648 155.5h3M654 155.5h3M660 155.5h3M666 155.5h3M672 155.5h3" stroke="#778899" stroke-width="1"/><path d="M12 188.5h3M18 188.5h3M24 188.5h3M30 188.5h3M36 188.5h3M42 188.5h3M48 188.5h3M54 188.5h3M60 188.5h3M66 188.5h3M72 188.5h3M78 188.5h3M84 188.5h3M90 188.5h3M96 188.5h3M102 188.5h3M108 188.5h3M114 188.5h3M120 188.5h3M126 188.5h3M132 188.5h3M138 188.5h3M144 188.5h3M150 188.5h3M156 188.5h3M162 188.5h3M168 188.5h3M174 188.5h3M180 188.5h3M186 188.5h3M192 188.5h3M198 188.5h3M204 188.5h3M210 188.5h3M216 188.5h3M222 188.5h3M228 188.5h3M234 188.5h3M240 188.5h3M246 188.5h3M252 188.5h3M258 188.5h3M264 188.5h3M270 188.5h3M276 188.5h3M282 188.5h3M288 188.5h3M294 188.5h3M300 188.5h3M306 188.5h3M312 188.5h3M318 188.5h3M324 188.5h3M330 188.5h3M336 188.5h3M342 188.5h3M348 188.5h3M354 188.5h3M360 188.5h3M366 188.5h3M372 188.5h3M378 188.5h3M384 188.5h3M390 188.5h3M396 188.5h3M402 188.5h3M408 188.5h3M414 188.5h3M420 188.5h3M426 188.5h3M432 188.5h3M438 188.5h3M444 188.5h3M450 188.5h3M456 188.5h3M462 188.5h3M468 188.5h3M474 188.5h3M480 188.5h3M486 188.5h3M492 188.5h3M498 188.5h3M504 188.5h3M510 188.5h3M516 188.5h3M522 188.5h3M528 188.5h3M534 188.5h3M540 188.5h3M546 188.5h3M552 188.5h3M558 188.5h3M564 188.5h3M570 188.5h3M576 188.5h3M582 188.5h3M588 188.5h3M594 188.5h3M600 188.5h3M606 188.5h3M612 188.5h3M618 188.5h3M624 188.5h3M630 188.5h3M636 188.5h3M642 188.5h3M648 188.5h3M654 188.5h3M660 188.5h3M666 188.5h3M672 188.5h3" stroke="#778899" stroke-width="1"/><path d="M12 221.5h3M18 221.5h3M24 221.5h3M30 221.5h3M36 221.5h3M42 221.5h3M48 221.5h3M54 221.5h3M60 221.5h3M66 221.5h3M72 221.5h3M78 221.5h3M84 221.5h3M90 221.5h3M96 221.5h3M102 221.5h3M108 221.5h3M114 221.5h3M120 221.5h3M126 221.5h3M132 221.5h3M138 221.5h3M144 221.5h3M150 221.5h3M156 221.5h3M162 221.5h3M168 221.5h3M174 221.5h3M180 221.5h3M186 221.5h3M192 221.5h3M198 221.5h3M204 221.5h3M210 221.5h3M216 221.5h3M222 221.5h3M228 221.5h3M234 221.5h3M240 221.5h3M246 221.5h3M252 221.5h3M258 221.5h3M264 221.5h3M270 221.5h3M276 221.5h3M282 221.5h3M288 221.5h3M294 221.5h3M300 221.5h3M306 221.5h3M312 221.5h3M318 221.5h3M324 221.5h3M330 221.5h3M336 221.5h3M342 221.5h3M348 221.5h3M354 221.5h3M360 221.5h3M366 221.5h3M372 221.5h3M378 221.5h3M384 221.5h3M390 221.5h3M396 221.5h3M402 221.5h3M408 221.5h3M414 221.5h3M420 221.5h3M426 221.5h3M432 221.5h3M438 221.5h3M444 221.5h3M450 221.5h3M456 221.5h3M462 221.5h3M468 221.5h3M474 221.5h3M480 221.5h3M486 221.5h3M492 221.5h3M498 221.5h3M504 221.5h3M510 221.5h3M516 221.5h3M522 221.5h3M528 221.5h3M534 221.5h3M540 221.5h3M546 221.5h3M552 221.5h3M558 221.5h3M564 221.5h3M570 221.5h3M576 221.5h3M582 221.5h3M588 221.5h3M594 221.5h3M600 221.5h3M606 221.5h3M612 221.5h3M618 221.5h3M624 221.5h3M630 221.5h3M636 221.5h3M642 221.5h3M648 221.5h3M654 221.5h3M660 221.5h3M666 221.5h3M672 221.5h3" stroke="#778899" stroke-width="1"/><path d="M12 255.5h3M18 255.5h3M24 255.5h3M30 255.5h3M36 255.5h3M42 255.5h3M48 255.5h3M54 255.5h3M60 255.5h3M66 255.5h3M72 255.5h3M78 255.5h3M84 255.5h3M90 255.5h3M96 255.5h3M102 255.5h3M108 255.5h3M114 255.5h3M120 255.5h3M126 255.5h3M132 255.5h3M138 255.5h3M144 255.5h3M150 255.5h3M156 255.5h3M162 255.5h3M168 255.5h3M174 255.5h3M180 255.5h3M186 255.5h3M192 255.5h3M198 255.5h3M204 255.5h3M210 255.5h3M216 255.5h3M222 255.5h3M228 255.5h3M234 255.5h3M240 255.5h3M246 255.5h3M252 255.5h3M258 255.5h3M264 255.5h3M270 255.5h3M276 255.5h3M282 255.5h3M288 255.5h3M294 255.5h3M300 255.5h3M306 255.5h3M312 255.5h3M318 255.5h3M324 255.5h3M330 255.5h3M336 255.5h3M342 255.5h3M348 255.5h3M354 255.5h3M360 255.5h3M366 255.5h3M372 255.5h3M378 255.5h3M384 255.5h3M390 255.5h3M396 255.5h3M402 255.5h3M408 255.5h3M414 255.5h3M420 255.5h3M426 255.5h3M432 255.5h3M438 255.5h3M444 255.5h3M450 255.5h3M456 255.5h3M462 255.5h3M468 255.5h3M474 255.5h3M480 255.5h3M486 255.5h3M492 255.5h3M498 255.5h3M504 255.5h3M510 255.5h3M516 255.5h3M522 255.5h3M528 255.5h3M534 255.5h3M540 255.5h3M546 255.5h3M552 255.5h3M558 255.5h3M564 255.5h3M570 255.5h3M576 255.5h3M582 255.5h3M588 255.5h3M594 255.5h3M600 255.5h3M606 255.5h3M612 255.5h3M618 255.5h3M624 255.5h3M630 255.5h3M636 255.5h3M642 255.5h3M648 255.5h3M654 255.5h3M660 255.5h3M666 255.5h3M672 255.5h3" stroke="#778899" stroke-width="1"/><path d="M12 288.5h3M18 288.5h3M24 288.5h3M30 288.5h3M36 288.5h3M42 288.5h3M48 288.5h3M54 288.5h3M60 288.5h3M66 288.5h3M72 288.5h3M78 288.5h3M84 288.5h3M90 288.5h3M96 288.5h3M102 288.5h3M108 288.5h3M114 288.5h3M120 288.5h3M126 288.5h3M132 288.5h3M138 288.5h3M144 288.5h3M150 288.5h3M156 288.5h3M162 288.5h3M168 288.5h3M174 288.5h3M180 288.5h3M186 288.5h3M192 288.5h3M198 288.5h3M204 288.5h3M210 288.5h3M216 288.5h3M222 288.5h3M228 288.5h3M234 288.5h3M240 288.5h3M246 288.5h3M252 288.5h3M258 288.5h3M264 288.5h3M270 288.5h3M276 288.5h3M282 288.5h3M288 288.5h3M294 288.5h3M300 288.5h3M306 288.5h3M312 288.5h3M318 288.5h3M324 288.5h3M330 288.5h3M336 288.5h3M342 288.5h3M348 288.5h3M354 288.5h3M360 288.5h3M366 288.5h3M372 288.5h3M378 288.5h3M384 288.5h3M390 288.5h3M396 288.5h3M402 288.5h3M408 288.5h3M414 288.5h3M420 288.5h3M426 288.5h3M432 288.5h3M438 288.5h3M444 288.5h3M450 288.5h3M456 288.5h3M462 288.5h3M468 288.5h3M474 288.5h3M480 288.5h3M486 288.5h3M492 288.5h3M498 288.5h3M504 288.5h3M510 288.5h3M516 288.5h3M522 288.5h3M528 288.5h3M534 288.5h3M540 288.5h3M546 288.5h3M552 288.5h3M558 288.5h3M564 288.5h3M570 288.5h3M576 288.5h3M582 288.5h3M588 288.5h3M594 288.5h3M600 288.5h3M606 288.5h3M612 288.5h3M618 288.5h3M624 288.5h3M630 288.5h3M636 288.5h3M642 288.5h3M648 288.5h3M654 288.5h3M660 288.5h3M666 288.5h3M672 288.5h3" stroke="#778899" stroke-width="1"/><path d="M12 493.5h3M18 493.5h3M24 493.5h3M30 493.5h3M36 493.5h3M42 493.5h3M48 493.5h3M54 493.5h3M60 493.5h3M66 493.5h3M72 493.5h3M78 493.5h3M84 493.5h3M90 493.5h3M96 493.5h3M102 493.5h3M108 493.5h3M114 493.5h3M120 493.5h3M126 493.5h3M132 493.5h3M138 493.5h3M144 493.5h3M150 493.5h3M156 493.5h3M162 493.5h3M168 493.5h3M174 493.5h3M180 493.5h3M186 493.5h3M192 493.5h3M198 493.5h3M204 493.5h3M210 493.5h3M216 493.5h3M222 493.5h3M228 493.5h3M234 493.5h3M240 493.5h3M246 493.5h3M252 493.5h3M258 493.5h3M264 493.5h3M270 493.5h3M276 493.5h3M282 493.5h3M288 493.5h3M294 493.5h3M300 493.5h3M306 493.5h3M312 493.5h3M318 493.5h3M324 493.5h3M330 493.5h3M336 493.5h3M342 493.5h3M348 493.5h3M354 493.5h3M360 493.5h3M366 493.5h3M372 493.5h3M378 493.5h3M384 493.5h3M390 493.5h3M396 493.5h3M402 493.5h3M408 493.5h3M414 493.5h3M420 493.5h3M426 493.5h3M432 493.5h3M438 493.5h3M444 493.5h3M450 493.5h3M456 493.5h3M462 493.5h3M468 493.5h3M474 493.5h3M480 493.5h3M486 493.5h3M492 493.5h3M498 493.5h3M504 493.5h3M510 493.5h3M516 493.5h3M522 493.5h3M528 493.5h3M534 493.5h3M540 493.5h3M546 493.5h3M552 493.5h3M558 493.5h3M564 493.5h3M570 493.5h3M576 493.5h3M582 493.5h3M588 493.5h3M594 493.5h3M600 493.5h3M606 493.5h3M612 493.5h3M618 493.5h3M624 493.5h3M630 493.5h3M636 493.5h3M642 493.5h3M648 493.5h3M654 493.5h3M660 493.5h3M666 493.5h3M672 493.5h3" stroke="#778899" stroke-width="1"/><path d="M12 356.5h3M18 356.5h3M24 356.5h3M30 356.5h3M36 356.5h3M42 356.5h3M48 356.5h3M54 356.5h3M60 356.5h3M66 356.5h3M72 356.5h3M78 356.5h3M84 356.5h3M90 356.5h3M96 356.5h3M102 356.5h3M108 356.5h3M114 356.5h3M120 356.5h3M126 356.5h3M132 356.5h3M138 356.5h3M144 356.5h3M150 356.5h3M156 356.5h3M162 356.5h3M168 356.5h3M174 356.5h3M180 356.5h3M186 356.5h3M192 356.5h3M198 356.5h3M204 356.5h3M210 356.5h3M216 356.5h3M222 356.5h3M228 356.5h3M234 356.5h3M240 356.5h3M246 356.5h3M252 356.5h3M258 356.5h3M264 356.5h3M270 356.5h3M276 356.5h3M282 356.5h3M288 356.5h3M294 356.5h3M300 356.5h3M306 356.5h3M312 356.5h3M318 356.5h3M324 356.5h3M330 356.5h3M336 356.5h3M342 356.5h3M348 356.5h3M354 356.5h3M360 356.5h3M366 356.5h3M372 356.5h3M378 356.5h3M384 356.5h3M390 356.5h3M396 356.5h3M402 356.5h3M408 356.5h3M414 356.5h3M420 356.5h3M426 356.5h3M432 356.5h3M438 356.5h3M444 356.5h3M450 356.5h3M456 356.5h3M462 356.5h3M468 356.5h3M474 356.5h3M480 356.5h3M486 356.5h3M492 356.5h3M498 356.5h3M504 356.5h3M510 356.5h3M516 356.5h3M522 356.5h3M528 356.5h3M534 356.5h3M540 356.5h3M546 356.5h3M552 356.5h3M558 356.5h3M564 356.5h3M570 356.5h3M576 356.5h3M582 356.5h3M588 356.5h3M594 356.5h3M600 356.5h3M606 356.5h3M612 356.5h3M618 356.5h3M624 356.5h3M630 356.5h3M636 356.5h3M642 356.5h3M648 356.5h3M654 356.5h3M660 356.5h3M666 356.5h3M672 356.5h3" stroke="#c0c0c0" stroke-width="1"/><path d="M12 436.5h3M18 436.5h3M24 436.5h3M30 436.5h3M36 436.5h3M42 436.5h3M48 436.5h3M54 436.5h3M60 436.5h3M66 436.5h3M72 436.5h3M78 436.5h3M84 436.5h3M90 436.5h3M96 436.5h3M102 436.5h3M108 436.5h3M114 436.5h3M120 436.5h3M126 436.5h3M132 436.5h3M138 436.5h3M144 436.5h3M150 436.5h3M156 436.5h3M162 436.5h3M168 436.5h3M174 436.5h3M180 436.5h3M186 436.5h3M192 436.5h3M198 436.5h3M204 436.5h3M210 436.5h3M216 436.5h3M222 436.5h3M228 436.5h3M234 436.5h3M240 436.5h3M246 436.5h3M252 436.5h3M258 436.5h3M264 436.5h3M270 436.5h3M276 436.5h3M282 436.5h3M288 436.5h3M294 436.5h3M300 436.5h3M306 436.5h3M312 436.5h3M318 436.5h3M324 436.5h3M330 436.5h3M336 436.5h3M342 436.5h3M348 436.5h3M354 436.5h3M360 436.5h3M366 436.5h3M372 436.5h3M378 436.5h3M384 436.5h3M390 436.5h3M396 436.5h3M402 436.5h3M408 436.5h3M414 436.5h3M420 436.5h3M426 436.5h3M432 436.5h3M438 436.5h3M444 436.5h3M450 436.5h3M456 436.5h3M462 436.5h3M468 436.5h3M474 436.5h3M480 436.5h3M486 436.5h3M492 436.5h3M498 436.5h3M504 436.5h3M510 436.5h3M516 436.5h3M522 436.5h3M528 436.5h3M534 436.5h3M540 436.5h3M546 436.5h3M552 436.5h3M558 436.5h3M564 436.5h3M570 436.5h3M576 436.5h3M582 436.5h3M588 436.5h3M594 436.5h3M600 436.5h3M606 436.5h3M612 436.5h3M618 436.5h3M624 436.5h3M630 436.5h3M636 436.5h3M642 436.5h3M648 436.5h3M654 436.5h3M660 436.5h3M666 436.5h3M672 436.5h3" stroke="#c0c0c0" stroke-width="1"/><path d="M12 447.5h3M18 447.5h3M24 447.5h3M30 447.5h3M36 447.5h3M42 447.5h3M48 447.5h3M54 447.5h3M60 447.5h3M66 447.5h3M72 447.5h3M78 447.5h3M84 447.5h3M90 447.5h3M96 447.5h3M102 447.5h3M108 447.5h3M114 447.5h3M120 447.5h3M126 447.5h3M132 447.5h3M138 447.5h3M144 447.5h3M150 447.5h3M156 447.5h3M162 447.5h3M168 447.5h3M174 447.5h3M180 447.5h3M186 447.5h3M192 447.5h3M198 447.5h3M204 447.5h3M210 447.5h3M216 447.5h3M222 447.5h3M228 447.5h3M234 447.5h3M240 447.5h3M246 447.5h3M252 447.5h3M258 447.5h3M264 447.5h3M270 447.5h3M276 447.5h3M282 447.5h3M288 447.5h3M294 447.5h3M300 447.5h3M306 447.5h3M312 447.5h3M318 447.5h3M324 447.5h3M330 447.5h3M336 447.5h3M342 447.5h3M348 447.5h3M354 447.5h3M360 447.5h3M366 447.5h3M372 447.5h3M378 447.5h3M384 447.5h3M390 447.5h3M396 447.5h3M402 447.5h3M408 447.5h3M414 447.5h3M420 447.5h3M426 447.5h3M432 447.5h3M438 447.5h3M444 447.5h3M450 447.5h3M456 447.5h3M462 447.5h3M468 447.5h3M474 447.5h3M480 447.5h3M486 447.5h3M492 447.5h3M498 447.5h3M504 447.5h3M510 447.5h3M516 447.5h3M522 447.5h3M528 447.5h3M534 447.5h3M540 447.5h3M546 447.5h3M552 447.5h3M558 447.5h3M564 447.5h3M570 447.5h3M576 447.5h3M582 447.5h3M588 447.5h3M594 447.5h3M600 447.5h3M606 447.5h3M612 447.5h3M618 447.5h3M624 447.5h3M630 447.5h3M636 447.5h3M642 447.5h3M648 447.5h3M654 447.5h3M660 447.5h3M666 447.5h3M672 447.5h3" stroke="#c0c0c0" stroke-width="1"/><path d="M12 465.5h3M18 465.5h3M24 465.5h3M30 465.5h3M36 465.5h3M42 465.5h3M48 465.5h3M54 465.5h3M60 465.5h3M66 465.5h3M72 465.5h3M78 465.5h3M84 465.5h3M90 465.5h3M96 465.5h3M102 465.5h3M108 465.5h3M114 465.5h3M120 465.5h3M126 465.5h3M132 465.5h3M138 465.5h3M144 465.5h3M150 465.5h3M156 465.5h3M162 465.5h3M168 465.5h3M174 465.5h3M180 465.5h3M186 465.5h3M192 465.5h3M198 465.5h3M204 465.5h3M210 465.5h3M216 465.5h3M222 465.5h3M228 465.5h3M234 465.5h3M240 465.5h3M246 465.5h3M252 465.5h3M258 465.5h3M264 465.5h3M270 465.5h3M276 465.5h3M282 465.5h3M288 465.5h3M294 465.5h3M300 465.5h3M306 465.5h3M312 465.5h3M318 465.5h3M324 465.5h3M330 465.5h3M336 465.5h3M342 465.5h3M348 465.5h3M354 465.5h3M360 465.5h3M366 465.5h3M372 465.5h3M378 465.5h3M384 465.5h3M390 465.5h3M396 465.5h3M402 465.5h3M408 465.5h3M414 465.5h3M420 465.5h3M426 465.5h3M432 465.5h3M438 465.5h3M444 465.5h3M450 465.5h3M456 465.5h3M462 465.5h3M468 465.5h3M474 465.5h3M480 465.5h3M486 465.5h3M492 465.5h3M498 465.5h3M504 465.5h3M510 465.5h3M516 465.5h3M522 465.5h3M528 465.5h3M534 465.5h3M540 465.5h3M546 465.5h3M552 465.5h3M558 465.5h3M564 465.5h3M570 465.5h3M576 465.5h3M582 465.5h3M588 465.5h3M594 465.5h3M600 465.5h3M606 465.5h3M612 465.5h3M618 465.5h3M624 465.5h3M630 465.5h3M636 465.5h3M642 465.5h3M648 465.5h3M654 465.5h3M660 465.5h3M666 465.5h3M672 465.5h3" stroke="#c0c0c0" stroke-width="1"/><path d="M12 522.5h3M18 522.5h3M24 522.5h3M30 522.5h3M36 522.5h3M42 522.5h3M48 522.5h3M54 522.5h3M60 522.5h3M66 522.5h3M72 522.5h3M78 522.5h3M84 522.5h3M90 522.5h3M96 522.5h3M102 522.5h3M108 522.5h3M114 522.5h3M120 522.5h3M126 522.5h3M132 522.5h3M138 522.5h3M144 522.5h3M150 522.5h3M156 522.5h3M162 522.5h3M168 522.5h3M174 522.5h3M180 522.5h3M186 522.5h3M192 522.5h3M198 522.5h3M204 522.5h3M210 522.5h3M216 522.5h3M222 522.5h3M228 522.5h3M234 522.5h3M240 522.5h3M246 522.5h3M252 522.5h3M258 522.5h3M264 522.5h3M270 522.5h3M276 522.5h3M282 522.5h3M288 522.5h3M294 522.5h3M300 522.5h3M306 522.5h3M312 522.5h3M318 522.5h3M324 522.5h3M330 522.5h3M336 522.5h3M342 522.5h3M348 522.5h3M354 522.5h3M360 522.5h3M366 522.5h3M372 522.5h3M378 522.5h3M384 522.5h3M390 522.5h3M396 522.5h3M402 522.5h3M408 522.5h3M414 522.5h3M420 522.5h3M426 522.5h3M432 522.5h3M438 522.5h3M444 522.5h3M450 522.5h3M456 522.5h3M462 522.5h3M468 522.5h3M474 522.5h3M480 522.5h3M486 522.5h3M492 522.5h3M498 522.5h3M504 522.5h3M510 522.5h3M516 522.5h3M522 522.5h3M528 522.5h3M534 522.5h3M540 522.5h3M546 522.5h3M552 522.5h3M558 522.5h3M564 522.5h3M570 522.5h3M576 522.5h3M582 522.5h3M588 522.5h3M594 522.5h3M600 522.5h3M606 522.5h3M612 522.5h3M618 522.5h3M624 522.5h3M630 522.5h3M636 522.5h3M642 522.5h3M648 522.5h3M654 522.5h3M660 522.5h3M666 522.5h3M672 522.5h3" stroke="#c0c0c0" stroke-width="1"/><path d="M12 539.5h3M18 539.5h3M24 539.5h3M30 539.5h3M36 539.5h3M42 539.5h3M48 539.5h3M54 539.5h3M60 539.5h3M66 539.5h3M72 539.5h3M78 539.5h3M84 539.5h3M90 539.5h3M96 539.5h3M102 539.5h3M108 539.5h3M114 539.5h3M120 539.5h3M126 539.5h3M132 539.5h3M138 539.5h3M144 539.5h3M150 539.5h3M156 539.5h3M162 539.5h3M168 539.5h3M174 539.5h3M180 539.5h3M186 539.5h3M192 539.5h3M198 539.5h3M204 539.5h3M210 539.5h3M216 539.5h3M222 539.5h3M228 539.5h3M234 539.5h3M240 539.5h3M246 539.5h3M252 539.5h3M258 539.5h3M264 539.5h3M270 539.5h3M276 539.5h3M282 539.5h3M288 539.5h3M294 539.5h3M300 539.5h3M306 539.5h3M312 539.5h3M318 539.5h3M324 539.5h3M330 539.5h3M336 539.5h3M342 539.5h3M348 539.5h3M354 539.5h3M360 539.5h3M366 539.5h3M372 539.5h3M378 539.5h3M384 539.5h3M390 539.5h3M396 539.5h3M402 539.5h3M408 539.5h3M414 539.5h3M420 539.5h3M426 539.5h3M432 539.5h3M438 539.5h3M444 539.5h3M450 539.5h3M456 539.5h3M462 539.5h3M468 539.5h3M474 539.5h3M480 539.5h3M486 539.5h3M492 539.5h3M498 539.5h3M504 539.5h3M510 539.5h3M516 539.5h3M522 539.5h3M528 539.5h3M534 539.5h3M540 539.5h3M546 539.5h3M552 539.5h3M558 539.5h3M564 539.5h3M570 539.5h3M576 539.5h3M582 539.5h3M588 539.5h3M594 539.5h3M600 539.5h3M606 539.5h3M612 539.5h3M618 539.5h3M624 539.5h3M630 539.5h3M636 539.5h3M642 539.5h3M648 539.5h3M654 539.5h3M660 539.5h3M666 539.5h3M672 539.5h3" stroke="#c0c0c0" stroke-width="1"/><rect x="10.5" y="33.5" width="666" height="258" fill="none" stroke="#fff" stroke-width="1"/><rect x="10.5" y="293.5" width="666" height="128" fill="none" stroke="#fff" stroke-width="1"/><rect x="10.5" y="423.5" width="666" height="128" fill="none" stroke="#fff" stroke-width="1"/><rect x="677" y="55" width="2" height="1" fill="#fff"/><rect x="677" y="88" width="2" height="1" fill="#fff"/><rect x="677" y="121" width="2" height="1" fill="#fff"/><rect x="677" y="155" width="2" height="1" fill="#fff"/><rect x="677" y="188" width="2" height="1" fill="#fff"/><rect x="677" y="221" width="2" height="1" fill="#fff"/><rect x="677" y="255" width="2" height="1" fill="#fff"/><rect x="677" y="288" width="2" height="1" fill="#fff"/><rect x="677" y="295" width="1" height="1" fill="#fff"/><rect x="677" y="420" width="1" height="1" fill="#fff"/><rect x="677" y="425" width="1" height="1" fill="#fff"/><rect x="677" y="493" width="1" height="1" fill="#fff"/><rect x="677" y="550" width="1" height="1" fill="#fff"/><rect x="11" y="552" width="1" height="3" fill="#fff"/><rect x="75" y="552" width="1" height="3" fill="#fff"/><rect x="139" y="552" width="1" height="3" fill="#fff"/><rect x="203" y="552" width="1" height="3" fill="#fff"/><rect x="267" y="552" width="1" height="3" fill="#fff"/><rect x="331" y="552" width="1" height="3" fill="#fff"/><rect x="395" y="552" width="1" height="3" fill="#fff"/><rect x="459" y="552" width="1" height="3" fill="#fff"/><rect x="523" y="552" width="1" height="3" fill="#fff"/><rect x="587" y="552" width="1" height="3" fill="#fff"/><rect x="651" y="552" width="1" height="3" fill="#fff"/><path d="M11 546 L11 551 L16 551 Z" fill="#778899"/><defs><clipPath id="cm"><rect x="11" y="34" width="665" height="257"/></clipPath><clipPath id="cmo"><rect x="11" y="294" width="665" height="127"/></clipPath><clipPath id="cr"><rect x="11" y="424" width="665" height="127"/></clipPath></defs><g clip-path="url(#cm)"><rect x="11" y="208" width="1" height="32" fill="#00ff00"/><rect x="9" y="217" width="5" height="23" fill="#00ff00"/><rect x="10" y="218" width="3" height="21" fill="#000"/><rect x="19" y="207" width="1" height="15" fill="#00ff00"/><rect x="17" y="216" width="5" height="1" fill="#00ff00"/><rect x="27" y="215" width="1" height="26" fill="#00ff00"/><rect x="25" y="216" width="5" height="22" fill="#00ff00"/><rect x="26" y="217" width="3" height="20" fill="#fff"/><rect x="35" y="232" width="1" height="17" fill="#00ff00"/><rect x="33" y="236" width="5" height="5" fill="#00ff00"/><rect x="34" y="237" width="3" height="3" fill="#fff"/><rect x="43" y="235" width="1" height="11" fill="#00ff00"/><rect x="41" y="240" width="5" height="2" fill="#00ff00"/><rect x="51" y="232" width="1" height="22" fill="#00ff00"/><rect x="49" y="238" width="5" height="5" fill="#00ff00"/><rect x="50" y="239" width="3" height="3" fill="#000"/><rect x="59" y="223" width="1" height="19" fill="#00ff00"/><rect x="57" y="228" width="5" height="10" fill="#00ff00"/><rect x="58" y="229" width="3" height="8" fill="#000"/><rect x="67" y="221" width="1" height="10" fill="#00ff00"/><rect x="65" y="228" width="5" height="2" fill="#00ff00"/><rect x="75" y="212" width="1" height="20" fill="#00ff00"/><rect x="73" y="217" width="5" height="13" fill="#00ff00"/><rect x="74" y="218" width="3" height="11" fill="#000"/><rect x="83" y="214" width="1" height="8" fill="#00ff00"/><rect x="81" y="217" width="5" height="3" fill="#00ff00"/><rect x="82" y="218" width="3" height="1" fill="#fff"/><rect x="91" y="214" width="1" height="8" fill="#00ff00"/><rect x="89" y="214" width="5" height="6" fill="#00ff00"/><rect x="90" y="215" width="3" height="4" fill="#000"/><rect x="99" y="209" width="1" height="9" fill="#00ff00"/><rect x="97" y="214" width="5" height="1" fill="#00ff00"/><rect x="107" y="212" width="1" height="10" fill="#00ff00"/><rect x="105" y="212" width="5" height="4" fill="#00ff00"/><rect x="106" y="213" width="3" height="2" fill="#000"/><rect x="115" y="200" width="1" height="13" fill="#00ff00"/><rect x="113" y="203" width="5" height="10" fill="#00ff00"/><rect x="114" y="204" width="3" height="8" fill="#000"/><rect x="123" y="197" width="1" height="15" fill="#00ff00"/><rect x="121" y="198" width="5" height="6" fill="#00ff00"/><rect x="122" y="199" width="3" height="4" fill="#000"/><rect x="131" y="199" width="1" height="41" fill="#00ff00"/><rect x="129" y="199" width="5" height="41" fill="#00ff00"/><rect x="130" y="200" width="3" height="39" fill="#fff"/><rect x="139" y="239" width="1" height="45" fill="#00ff00"/><rect x="137" y="239" width="5" height="20" fill="#00ff00"/><rect x="138" y="240" width="3" height="18" fill="#fff"/><rect x="147" y="247" width="1" height="24" fill="#00ff00"/><rect x="145" y="258" width="5" height="2" fill="#00ff00"/><rect x="155" y="201" width="1" height="59" fill="#00ff00"/><rect x="153" y="201" width="5" height="59" fill="#00ff00"/><rect x="154" y="202" width="3" height="57" fill="#000"/><rect x="163" y="169" width="1" height="47" fill="#00ff00"/><rect x="161" y="176" width="5" height="26" fill="#00ff00"/><rect x="162" y="177" width="3" height="24" fill="#000"/><rect x="171" y="139" width="1" height="40" fill="#00ff00"/><rect x="169" y="149" width="5" height="28" fill="#00ff00"/><rect x="170" y="150" width="3" height="26" fill="#000"/><rect x="179" y="144" width="1" height="26" fill="#00ff00"/><rect x="177" y="149" width="5" height="16" fill="#00ff00"/><rect x="178" y="150" width="3" height="14" fill="#fff"/><rect x="187" y="116" width="1" height="49" fill="#00ff00"/><rect x="185" y="127" width="5" height="38" fill="#00ff00"/><rect x="186" y="128" width="3" height="36" fill="#000"/><rect x="195" y="122" width="1" height="17" fill="#00ff00"/><rect x="193" y="123" width="5" height="4" fill="#00ff00"/><rect x="194" y="124" width="3" height="2" fill="#000"/><rect x="203" y="116" width="1" height="22" fill="#00ff00"/><rect x="201" y="124" width="5" height="10" fill="#00ff00"/><rect x="202" y="125" width="3" height="8" fill="#fff"/><rect x="211" y="133" width="1" height="15" fill="#00ff00"/><rect x="209" y="133" width="5" height="12" fill="#00ff00"/><rect x="210" y="134" width="3" height="10" fill="#fff"/><rect x="219" y="132" width="1" height="14" fill="#00ff00"/><rect x="217" y="143" width="5" height="1" fill="#00ff00"/><rect x="227" y="143" width="1" height="13" fill="#00ff00"/><rect x="225" y="144" width="5" height="12" fill="#00ff00"/><rect x="226" y="145" width="3" height="10" fill="#fff"/><rect x="235" y="141" width="1" height="15" fill="#00ff00"/><rect x="233" y="145" width="5" height="10" fill="#00ff00"/><rect x="234" y="146" width="3" height="8" fill="#000"/><rect x="243" y="141" width="1" height="16" fill="#00ff00"/><rect x="241" y="144" width="5" height="6" fill="#00ff00"/><rect x="242" y="145" width="3" height="4" fill="#fff"/><rect x="251" y="144" width="1" height="11" fill="#00ff00"/><rect x="249" y="148" width="5" height="2" fill="#00ff00"/><rect x="259" y="136" width="1" height="18" fill="#00ff00"/><rect x="257" y="144" width="5" height="5" fill="#00ff00"/><rect x="258" y="145" width="3" height="3" fill="#000"/><rect x="267" y="117" width="1" height="33" fill="#00ff00"/><rect x="265" y="121" width="5" height="25" fill="#00ff00"/><rect x="266" y="122" width="3" height="23" fill="#000"/><rect x="275" y="117" width="1" height="9" fill="#00ff00"/><rect x="273" y="120" width="5" height="4" fill="#00ff00"/><rect x="274" y="121" width="3" height="2" fill="#fff"/><rect x="283" y="112" width="1" height="13" fill="#00ff00"/><rect x="281" y="114" width="5" height="11" fill="#00ff00"/><rect x="282" y="115" width="3" height="9" fill="#000"/><rect x="291" y="107" width="1" height="12" fill="#00ff00"/><rect x="289" y="114" width="5" height="4" fill="#00ff00"/><rect x="290" y="115" width="3" height="2" fill="#fff"/><rect x="299" y="111" width="1" height="13" fill="#00ff00"/><rect x="297" y="116" width="5" height="8" fill="#00ff00"/><rect x="298" y="117" width="3" height="6" fill="#fff"/><rect x="307" y="120" width="1" height="13" fill="#00ff00"/><rect x="305" y="123" width="5" height="6" fill="#00ff00"/><rect x="306" y="124" width="3" height="4" fill="#fff"/><rect x="315" y="109" width="1" height="24" fill="#00ff00"/><rect x="313" y="128" width="5" height="2" fill="#00ff00"/><rect x="323" y="111" width="1" height="33" fill="#00ff00"/><rect x="321" y="120" width="5" height="10" fill="#00ff00"/><rect x="322" y="121" width="3" height="8" fill="#000"/><rect x="331" y="98" width="1" height="35" fill="#00ff00"/><rect x="329" y="98" width="5" height="24" fill="#00ff00"/><rect x="330" y="99" width="3" height="22" fill="#000"/><rect x="339" y="91" width="1" height="18" fill="#00ff00"/><rect x="337" y="95" width="5" height="4" fill="#00ff00"/><rect x="338" y="96" width="3" height="2" fill="#000"/><rect x="347" y="85" width="1" height="25" fill="#00ff00"/><rect x="345" y="93" width="5" height="2" fill="#00ff00"/><rect x="355" y="82" width="1" height="22" fill="#00ff00"/><rect x="353" y="91" width="5" height="3" fill="#00ff00"/><rect x="354" y="92" width="3" height="1" fill="#000"/><rect x="363" y="62" width="1" height="31" fill="#00ff00"/><rect x="361" y="63" width="5" height="29" fill="#00ff00"/><rect x="362" y="64" width="3" height="27" fill="#000"/><rect x="371" y="49" width="1" height="37" fill="#00ff00"/><rect x="369" y="62" width="5" height="21" fill="#00ff00"/><rect x="370" y="63" width="3" height="19" fill="#fff"/><rect x="379" y="82" width="1" height="39" fill="#00ff00"/><rect x="377" y="82" width="5" height="12" fill="#00ff00"/><rect x="378" y="83" width="3" height="10" fill="#fff"/><rect x="387" y="81" width="1" height="24" fill="#00ff00"/><rect x="385" y="93" width="5" height="10" fill="#00ff00"/><rect x="386" y="94" width="3" height="8" fill="#fff"/><rect x="395" y="89" width="1" height="19" fill="#00ff00"/><rect x="393" y="101" width="5" height="2" fill="#00ff00"/><rect x="403" y="92" width="1" height="21" fill="#00ff00"/><rect x="401" y="100" width="5" height="2" fill="#00ff00"/><rect x="411" y="91" width="1" height="67" fill="#00ff00"/><rect x="409" y="100" width="5" height="46" fill="#00ff00"/><rect x="410" y="101" width="3" height="44" fill="#fff"/><rect x="419" y="113" width="1" height="36" fill="#00ff00"/><rect x="417" y="119" width="5" height="27" fill="#00ff00"/><rect x="418" y="120" width="3" height="25" fill="#000"/><rect x="427" y="111" width="1" height="35" fill="#00ff00"/><rect x="425" y="119" width="5" height="27" fill="#00ff00"/><rect x="426" y="120" width="3" height="25" fill="#fff"/><rect x="435" y="132" width="1" height="18" fill="#00ff00"/><rect x="433" y="138" width="5" height="7" fill="#00ff00"/><rect x="434" y="139" width="3" height="5" fill="#000"/><rect x="443" y="128" width="1" height="18" fill="#00ff00"/><rect x="441" y="134" width="5" height="7" fill="#00ff00"/><rect x="442" y="135" width="3" height="5" fill="#fff"/><rect x="451" y="137" width="1" height="21" fill="#00ff00"/><rect x="449" y="141" width="5" height="12" fill="#00ff00"/><rect x="450" y="142" width="3" height="10" fill="#fff"/><rect x="459" y="148" width="1" height="8" fill="#00ff00"/><rect x="457" y="148" width="5" height="5" fill="#00ff00"/><rect x="458" y="149" width="3" height="3" fill="#000"/><rect x="467" y="146" width="1" height="17" fill="#00ff00"/><rect x="465" y="148" width="5" height="15" fill="#00ff00"/><rect x="466" y="149" width="3" height="13" fill="#fff"/><rect x="475" y="153" width="1" height="20" fill="#00ff00"/><rect x="473" y="162" width="5" height="8" fill="#00ff00"/><rect x="474" y="163" width="3" height="6" fill="#fff"/><rect x="483" y="161" width="1" height="16" fill="#00ff00"/><rect x="481" y="167" width="5" height="2" fill="#00ff00"/><rect x="491" y="166" width="1" height="10" fill="#00ff00"/><rect x="489" y="167" width="5" height="2" fill="#00ff00"/><rect x="499" y="158" width="1" height="13" fill="#00ff00"/><rect x="497" y="162" width="5" height="8" fill="#00ff00"/><rect x="498" y="163" width="3" height="6" fill="#000"/><rect x="507" y="161" width="1" height="33" fill="#00ff00"/><rect x="505" y="163" width="5" height="6" fill="#00ff00"/><rect x="506" y="164" width="3" height="4" fill="#fff"/><rect x="515" y="166" width="1" height="44" fill="#00ff00"/><rect x="513" y="168" width="5" height="39" fill="#00ff00"/><rect x="514" y="169" width="3" height="37" fill="#fff"/><rect x="523" y="182" width="1" height="29" fill="#00ff00"/><rect x="521" y="206" width="5" height="4" fill="#00ff00"/><rect x="522" y="207" width="3" height="2" fill="#fff"/><rect x="531" y="179" width="1" height="33" fill="#00ff00"/><rect x="529" y="181" width="5" height="29" fill="#00ff00"/><rect x="530" y="182" width="3" height="27" fill="#000"/><rect x="539" y="181" width="1" height="40" fill="#00ff00"/><rect x="537" y="181" width="5" height="38" fill="#00ff00"/><rect x="538" y="182" width="3" height="36" fill="#fff"/><rect x="547" y="202" width="1" height="30" fill="#00ff00"/><rect x="545" y="217" width="5" height="10" fill="#00ff00"/><rect x="546" y="218" width="3" height="8" fill="#fff"/><rect x="555" y="221" width="1" height="36" fill="#00ff00"/><rect x="553" y="228" width="5" height="13" fill="#00ff00"/><rect x="554" y="229" width="3" height="11" fill="#fff"/><rect x="563" y="187" width="1" height="71" fill="#00ff00"/><rect x="561" y="224" width="5" height="17" fill="#00ff00"/><rect x="562" y="225" width="3" height="15" fill="#000"/><rect x="571" y="207" width="1" height="75" fill="#00ff00"/><rect x="569" y="223" width="5" height="49" fill="#00ff00"/><rect x="570" y="224" width="3" height="47" fill="#fff"/><rect x="579" y="229" width="1" height="46" fill="#00ff00"/><rect x="577" y="246" width="5" height="28" fill="#00ff00"/><rect x="578" y="247" width="3" height="26" fill="#000"/><rect x="587" y="242" width="1" height="31" fill="#00ff00"/><rect x="585" y="245" width="5" height="26" fill="#00ff00"/><rect x="586" y="246" width="3" height="24" fill="#fff"/><rect x="595" y="252" width="1" height="22" fill="#00ff00"/><rect x="593" y="259" width="5" height="12" fill="#00ff00"/><rect x="594" y="260" width="3" height="10" fill="#000"/><rect x="603" y="227" width="1" height="41" fill="#00ff00"/><rect x="601" y="241" width="5" height="19" fill="#00ff00"/><rect x="602" y="242" width="3" height="17" fill="#000"/><rect x="611" y="227" width="1" height="21" fill="#00ff00"/><rect x="609" y="234" width="5" height="8" fill="#00ff00"/><rect x="610" y="235" width="3" height="6" fill="#000"/><rect x="619" y="225" width="1" height="21" fill="#00ff00"/><rect x="617" y="234" width="5" height="8" fill="#00ff00"/><rect x="618" y="235" width="3" height="6" fill="#fff"/><rect x="627" y="236" width="1" height="8" fill="#00ff00"/><rect x="625" y="240" width="5" height="1" fill="#00ff00"/><rect x="635" y="235" width="1" height="10" fill="#00ff00"/><rect x="633" y="239" width="5" height="2" fill="#00ff00"/><rect x="643" y="229" width="1" height="16" fill="#00ff00"/><rect x="641" y="238" width="5" height="2" fill="#00ff00"/><rect x="651" y="217" width="1" height="23" fill="#00ff00"/><rect x="649" y="231" width="5" height="7" fill="#00ff00"/><rect x="650" y="232" width="3" height="5" fill="#000"/><rect x="659" y="222" width="1" height="14" fill="#00ff00"/><rect x="657" y="225" width="5" height="5" fill="#00ff00"/><rect x="658" y="226" width="3" height="3" fill="#000"/><rect x="667" y="210" width="1" height="17" fill="#00ff00"/><rect x="665" y="210" width="5" height="16" fill="#00ff00"/><rect x="666" y="211" width="3" height="14" fill="#000"/><rect x="675" y="205" width="1" height="10" fill="#00ff00"/><rect x="673" y="209" width="5" height="2" fill="#00ff00"/></g><polyline points="11.5,363.1 19.5,362.9 27.5,369.4 35.5,375.8 43.5,370.1 51.5,378.4 59.5,359.6 67.5,347.2 75.5,343.9 83.5,348.4 91.5,335.9 99.5,346.9 107.5,345.8 115.5,340.4 123.5,347.3 131.5,365.7 139.5,365.7 147.5,365.7 155.5,336.8 163.5,328.6 171.5,317.5 179.5,323.8 187.5,312.0 195.5,310.9 203.5,317.8 211.5,321.8 219.5,322.7 227.5,332.8 235.5,330.7 243.5,313.1 251.5,303.2 259.5,300.8 267.5,317.8 275.5,329.4 283.5,338.5 291.5,334.2 299.5,354.8 307.5,357.4 315.5,355.1 323.5,345.8 331.5,335.5 339.5,327.9 347.5,330.8 355.5,327.9 363.5,315.9 371.5,324.1 379.5,342.6 387.5,345.1 395.5,348.5 403.5,347.9 411.5,365.7 419.5,351.7 427.5,363.9 435.5,364.1 443.5,376.2 451.5,382.9 459.5,382.6 467.5,390.0 475.5,406.5 483.5,396.0 491.5,392.6 499.5,385.7 507.5,388.0 515.5,405.5 523.5,387.2 531.5,385.7 539.5,390.6 547.5,396.8 555.5,403.0 563.5,391.3 571.5,414.1 579.5,397.1 587.5,403.5 595.5,400.4 603.5,390.6 611.5,390.6 619.5,390.8 627.5,372.2 635.5,370.7 643.5,382.3 651.5,363.0 659.5,357.0 667.5,342.9 675.5,347.6" fill="none" stroke="#1e90ff" stroke-width="2" stroke-linejoin="round" clip-path="url(#cmo)"/><polyline points="11.5,530.8 19.5,528.7 27.5,529.1 35.5,530.4 43.5,530.8 51.5,530.8 59.5,528.0 67.5,527.0 75.5,526.8 83.5,522.9 91.5,517.5 99.5,510.9 107.5,501.5 115.5,491.0 123.5,481.7 131.5,477.6 139.5,479.7 147.5,479.7 155.5,473.0 163.5,470.9 171.5,470.4 179.5,465.5 187.5,464.5 195.5,460.0 203.5,457.3 211.5,454.8 219.5,452.1 227.5,449.7 235.5,448.5 243.5,448.9 251.5,448.9 259.5,448.9 267.5,448.6 275.5,447.7 283.5,446.0 291.5,445.9 299.5,444.6 307.5,446.6 315.5,448.2 323.5,448.2 331.5,447.7 339.5,446.9 347.5,446.9 355.5,446.9 363.5,447.0 371.5,447.0 379.5,447.0 387.5,447.9 395.5,446.1 403.5,445.7 411.5,453.8 419.5,455.0 427.5,460.1 435.5,469.7 443.5,479.3 451.5,492.0 459.5,502.9 467.5,515.3 475.5,521.4 483.5,527.6 491.5,531.0 499.5,534.3 507.5,538.5 515.5,541.5 523.5,544.1 531.5,547.2 539.5,549.0 547.5,549.3 555.5,549.0 563.5,549.0 571.5,548.8 579.5,548.8 587.5,548.8 595.5,548.8 603.5,547.9 611.5,547.7 619.5,546.7 627.5,546.0 635.5,545.7 643.5,543.8 651.5,540.6 659.5,537.9 667.5,531.3 675.5,525.9" fill="none" stroke="#00ffff" stroke-width="2" stroke-linejoin="round" clip-path="url(#cr)"/><polyline points="11.5,474.8 19.5,476.2 27.5,479.9 35.5,483.4 43.5,489.6 51.5,491.3 59.5,494.6 67.5,496.9 75.5,499.5 83.5,503.4 91.5,504.6 99.5,506.7 107.5,507.3 115.5,507.3 123.5,507.2 131.5,509.4 139.5,513.3 147.5,517.3 155.5,517.5 163.5,513.9 171.5,509.1 179.5,504.2 187.5,500.0 195.5,495.1 203.5,493.3 211.5,488.9 219.5,484.6 227.5,480.5 235.5,477.2 243.5,474.3 251.5,470.7 259.5,467.3 267.5,464.0 275.5,462.5 283.5,460.9 291.5,459.2 299.5,456.4 307.5,454.4 315.5,452.0 323.5,449.7 331.5,447.9 339.5,446.1 347.5,445.3 355.5,443.6 363.5,442.0 371.5,442.0 379.5,442.0 387.5,441.5 395.5,441.0 403.5,441.0 411.5,441.7 419.5,442.0 427.5,443.0 435.5,445.0 443.5,446.2 451.5,449.2 459.5,451.2 467.5,454.9 475.5,459.1 483.5,462.5 491.5,464.8 499.5,469.4 507.5,474.3 515.5,479.2 523.5,484.7 531.5,490.6 539.5,496.0 547.5,502.1 555.5,508.0 563.5,513.7 571.5,518.5 579.5,522.8 587.5,525.9 595.5,529.7 603.5,531.8 611.5,532.5 619.5,534.5 627.5,536.0 635.5,536.8 643.5,538.6 651.5,540.4 659.5,541.5 667.5,542.7 675.5,543.0" fill="none" stroke="#ffff00" stroke-width="2" stroke-linejoin="round" clip-path="url(#cr)"/><g shape-rendering="auto"><rect x="161.6" y="232.5" width="3" height="19.3" fill="#ee82ee"/><polygon points="153.5,239.6 163.1,230.7 172.7,239.6 172.7,243.2 163.1,234.39999999999998 153.5,243.2" fill="#ee82ee"/><polygon points="154.50,266.10 152.76,270.49 148.09,269.80 151.02,273.50 148.09,277.20 152.76,276.51 154.50,280.90 156.24,276.51 160.91,277.20 157.98,273.50 160.91,269.80 156.24,270.49" fill="#ee82ee"/><rect x="417.7" y="73.8" width="3" height="18" fill="#d6d6d6"/><polygon points="409.8,82.5 419.2,91.0 428.59999999999997,82.5 428.59999999999997,86.2 419.2,94.8 409.8,86.2" fill="#d6d6d6"/><polygon points="410.50,70.10 408.88,74.19 404.52,73.55 407.26,77.00 404.52,80.45 408.88,79.81 410.50,83.90 412.12,79.81 416.48,80.45 413.74,77.00 416.48,73.55 412.12,74.19" fill="#d6d6d6"/><rect x="433.9" y="92.2" width="3" height="18" fill="#d6d6d6"/><polygon points="426.0,100.9 435.4,109.4 444.79999999999995,100.9 444.79999999999995,104.60000000000001 435.4,113.2 426.0,104.60000000000001" fill="#d6d6d6"/><polygon points="426.60,90.50 424.98,94.59 420.62,93.95 423.36,97.40 420.62,100.85 424.98,100.21 426.60,104.30 428.22,100.21 432.58,100.85 429.84,97.40 432.58,93.95 428.22,94.59" fill="#d6d6d6"/></g></svg>
<div class="t" style="left:682px;top:51px;font-size:10px;letter-spacing:-0.35px;color:#fff">0.97635</div><div class="t" style="left:682px;top:84px;font-size:10px;letter-spacing:-0.35px;color:#fff">0.97510</div><div class="t" style="left:682px;top:117px;font-size:10px;letter-spacing:-0.35px;color:#fff">0.97385</div><div class="t" style="left:682px;top:151px;font-size:10px;letter-spacing:-0.35px;color:#fff">0.97260</div><div class="t" style="left:682px;top:184px;font-size:10px;letter-spacing:-0.35px;color:#fff">0.97135</div><div class="t" style="left:682px;top:217px;font-size:10px;letter-spacing:-0.35px;color:#fff">0.97010</div><div class="t" style="left:682px;top:251px;font-size:10px;letter-spacing:-0.35px;color:#fff">0.96885</div><div class="t" style="left:682px;top:284px;font-size:10px;letter-spacing:-0.35px;color:#fff">0.96760</div><div class="t" style="left:681px;top:296px;font-size:10px;letter-spacing:-0.5px;color:#fff">100.4898</div><div class="t" style="left:679px;top:352px;font-size:10px;letter-spacing:-0.2px;color:#fff">100</div><div class="t" style="left:680px;top:410px;font-size:10px;letter-spacing:-0.35px;color:#fff">99.4792</div><div class="t" style="left:680px;top:426px;font-size:10px;letter-spacing:-0.2px;color:#fff">120</div><div class="t" style="left:680px;top:432px;font-size:10px;letter-spacing:-0.2px;color:#fff">100</div><div class="t" style="left:679px;top:443px;font-size:10px;letter-spacing:-0.2px;color:#fff">80</div><div class="t" style="left:679px;top:461px;font-size:10px;letter-spacing:-0.2px;color:#fff">50</div><div class="t" style="left:680px;top:489px;font-size:10px;letter-spacing:-0.2px;color:#fff">0.00</div><div class="t" style="left:679px;top:518px;font-size:10px;letter-spacing:-0.2px;color:#fff">-50</div><div class="t" style="left:679px;top:534px;font-size:10px;letter-spacing:-0.2px;color:#fff">-80</div><div class="t" style="left:680px;top:539px;font-size:10px;letter-spacing:-0.2px;color:#fff">-100</div><div class="t" style="left:11px;top:556px;font-size:10px;letter-spacing:-0.6px;color:#fff">27 Jan 2020</div><div class="t" style="left:75px;top:556px;font-size:10px;letter-spacing:-0.45px;color:#fff">28 Jan 03:00</div><div class="t" style="left:139px;top:556px;font-size:10px;letter-spacing:-0.45px;color:#fff">28 Jan 11:00</div><div class="t" style="left:203px;top:556px;font-size:10px;letter-spacing:-0.45px;color:#fff">28 Jan 19:00</div><div class="t" style="left:267px;top:556px;font-size:10px;letter-spacing:-0.45px;color:#fff">29 Jan 03:00</div><div class="t" style="left:331px;top:556px;font-size:10px;letter-spacing:-0.45px;color:#fff">29 Jan 11:00</div><div class="t" style="left:395px;top:556px;font-size:10px;letter-spacing:-0.45px;color:#fff">29 Jan 19:00</div><div class="t" style="left:459px;top:556px;font-size:10px;letter-spacing:-0.45px;color:#fff">30 Jan 03:00</div><div class="t" style="left:523px;top:556px;font-size:10px;letter-spacing:-0.45px;color:#fff">30 Jan 11:00</div><div class="t" style="left:587px;top:556px;font-size:10px;letter-spacing:-0.45px;color:#fff">30 Jan 19:00</div><div class="t" style="left:651px;top:556px;font-size:10px;letter-spacing:-0.45px;color:#fff">31 Jan 03:00</div><div class="t" style="left:26px;top:37px;font-size:10px;letter-spacing:-0.15px;color:#fff">USDCHF,H1</div><div class="t" style="left:87px;top:37px;font-size:10px;letter-spacing:-0.35px;color:#fff">0.90426 0.90472 0.90345 0.90445</div><div class="t" style="left:15px;top:298px;font-size:10px;letter-spacing:-0.4px;color:#fff">Momentum(14) 99.7331</div><div class="t" style="left:15px;top:428px;font-size:10px;letter-spacing:-0.35px;color:#fff">R1(26) -94.3  R1(52) -86.7</div><svg width="8" height="5" style="left:14px;top:40px"><path d="M0 0H7L3.5 4Z" fill="#fff"/></svg>
</div></body></html>
